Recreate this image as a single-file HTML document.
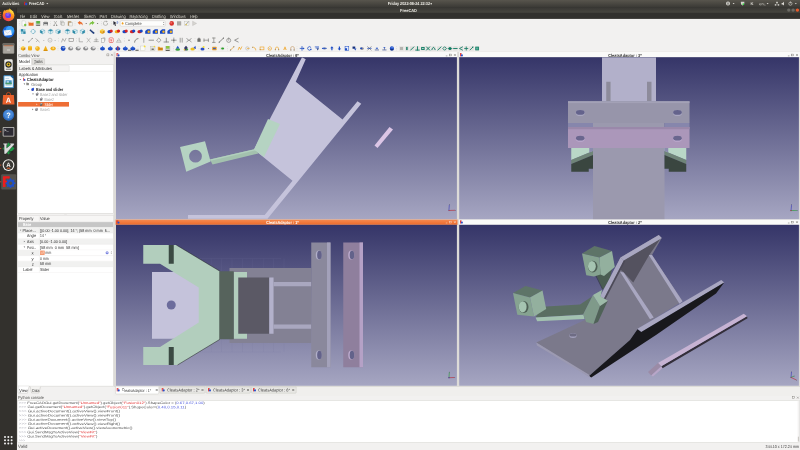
<!DOCTYPE html>
<html lang="en"><head><meta charset="utf-8"><title>FreeCAD</title>
<style>
html,body{margin:0;padding:0;background:#f2f1f0;}
body{width:800px;height:450px;overflow:hidden;position:relative;font-family:'Liberation Sans', sans-serif;}
svg{position:absolute;left:0;top:0;display:block;will-change:transform;}
text{font-family:'Liberation Sans', sans-serif;white-space:pre;text-rendering:geometricPrecision;}
</style></head><body>
<svg width="800" height="450" viewBox="0 0 800 450">
<defs>
<linearGradient id="bg" x1="0" y1="0" x2="0" y2="1"><stop offset="0" stop-color="#353568"/><stop offset="1" stop-color="#a6a6c2"/></linearGradient>
<linearGradient id="tb" x1="0" y1="0" x2="0" y2="1"><stop offset="0" stop-color="#393834"/><stop offset="1" stop-color="#474640"/></linearGradient>
<linearGradient id="pn" x1="0" y1="0" x2="0" y2="1"><stop offset="0" stop-color="#58554d"/><stop offset="1" stop-color="#393834"/></linearGradient>
<linearGradient id="or" x1="0" y1="0" x2="0" y2="1"><stop offset="0" stop-color="#f58a50"/><stop offset="1" stop-color="#ec6a2c"/></linearGradient>
<linearGradient id="ffx" x1="0.9" y1="0" x2="0.2" y2="1"><stop offset="0" stop-color="#ffd030"/><stop offset="0.45" stop-color="#ff8a1c"/><stop offset="1" stop-color="#f5305c"/></linearGradient>
</defs>
<rect x="0.00" y="0.00" width="800.00" height="450.00" fill="#f2f1f0"/>
<rect x="0.00" y="0.00" width="800.00" height="18.40" fill="#32312e"/>
<rect x="0.00" y="0.00" width="800.00" height="7.60" fill="url(#pn)"/>
<rect x="0.00" y="7.50" width="800.00" height="5.20" fill="url(#tb)"/>
<rect x="16.80" y="18.00" width="783.20" height="0.80" fill="#2c2b28"/>
<rect x="0.00" y="7.60" width="16.80" height="443.00" fill="#33312d"/>
<rect x="16.30" y="7.60" width="0.60" height="443.00" fill="#2a2926"/>
<text x="2.30" y="5.18" transform="rotate(0.03 2.30 5.18)" font-size="4.4" fill="#e8e6e0" font-weight="bold" textLength="17.00" lengthAdjust="spacingAndGlyphs">Activities</text>
<rect x="24.20" y="1.80" width="1.20" height="3.40" fill="#e02020"/>
<circle cx="26.20" cy="4.00" r="1.20" fill="#2a50c8"/>
<text x="29.00" y="5.18" transform="rotate(0.03 29.00 5.18)" font-size="4.4" fill="#e8e6e0" font-weight="bold" textLength="15.40" lengthAdjust="spacingAndGlyphs">FreeCAD</text>
<polygon points="46.30,3.00 48.30,3.00 47.30,4.30" fill="#e8e6e0"/>
<text x="387.80" y="5.18" transform="rotate(0.03 387.80 5.18)" font-size="4.4" fill="#eeece6" font-weight="bold" textLength="42.20" lengthAdjust="spacingAndGlyphs">Friday 2022-06-24 22:32</text>
<circle cx="431.20" cy="3.70" r="0.80" fill="#eeece6"/>
<circle cx="728.00" cy="3.60" r="2.00" fill="#d8d6d0"/>
<rect x="727.60" y="2.40" width="0.80" height="2.40" fill="#34332f"/>
<polygon points="732.60,3.00 734.60,3.00 733.60,4.20" fill="#d8d6d0"/>
<polygon points="740.80,1.80 744.40,1.80 744.20,4.20 742.60,5.60 741.00,4.20" fill="#d8d6d0"/>
<circle cx="743.30" cy="4.20" r="0.90" fill="#38d048"/>
<text x="750.60" y="5.11" transform="rotate(0.03 750.60 5.11)" font-size="4.2" fill="#d8d6d0" font-weight="bold">K</text>
<text x="759.30" y="5.17" transform="rotate(0.03 759.30 5.17)" font-size="3.8" fill="#d8d6d0" textLength="4.60" lengthAdjust="spacingAndGlyphs">en</text>
<text x="764.20" y="5.46" transform="rotate(0.03 764.20 5.46)" font-size="2.4" fill="#d8d6d0">1</text>
<polygon points="766.60,3.00 768.60,3.00 767.60,4.20" fill="#d8d6d0"/>
<rect x="776.20" y="1.80" width="1.60" height="1.40" fill="#d8d6d0"/>
<rect x="774.80" y="4.20" width="1.50" height="1.40" fill="#d8d6d0"/>
<rect x="777.70" y="4.20" width="1.50" height="1.40" fill="#d8d6d0"/>
<rect x="776.80" y="3.00" width="0.40" height="1.40" fill="#d8d6d0"/>
<polygon points="781.60,3.00 782.60,3.00 784.00,1.80 784.00,5.40 782.60,4.40 781.60,4.40" fill="#d8d6d0"/>
<circle cx="790.4" cy="3.7" r="1.6" fill="none" stroke="#d8d6d0" stroke-width="0.6"/>
<rect x="790.10" y="1.60" width="0.60" height="1.80" fill="#d8d6d0"/>
<polygon points="794.80,3.00 796.80,3.00 795.80,4.20" fill="#d8d6d0"/>
<text x="400.00" y="11.68" transform="rotate(0.03 400.00 11.68)" font-size="4.4" fill="#e8e6e0" font-weight="bold" textLength="17.00" lengthAdjust="spacingAndGlyphs">FreeCAD</text>
<circle cx="788.80" cy="10.10" r="1.70" fill="#6b6a64"/>
<circle cx="793.10" cy="10.10" r="1.70" fill="#6b6a64"/>
<circle cx="797.40" cy="10.10" r="1.70" fill="#e8592a"/>
<text x="20.00" y="17.72" transform="rotate(0.03 20.00 17.72)" font-size="4.5" fill="#dcd9d0" textLength="5.00" lengthAdjust="spacingAndGlyphs">File</text>
<line x1="20.00" y1="17.90" x2="21.60" y2="17.90" stroke="#dcd9d0" stroke-width="0.3" opacity="0.7"/>
<text x="30.00" y="17.72" transform="rotate(0.03 30.00 17.72)" font-size="4.5" fill="#dcd9d0" textLength="6.90" lengthAdjust="spacingAndGlyphs">Edit</text>
<line x1="30.00" y1="17.90" x2="31.60" y2="17.90" stroke="#dcd9d0" stroke-width="0.3" opacity="0.7"/>
<text x="41.25" y="17.72" transform="rotate(0.03 41.25 17.72)" font-size="4.5" fill="#dcd9d0" textLength="8.15" lengthAdjust="spacingAndGlyphs">View</text>
<line x1="41.25" y1="17.90" x2="42.85" y2="17.90" stroke="#dcd9d0" stroke-width="0.3" opacity="0.7"/>
<text x="53.75" y="17.72" transform="rotate(0.03 53.75 17.72)" font-size="4.5" fill="#dcd9d0" textLength="8.75" lengthAdjust="spacingAndGlyphs">Tools</text>
<line x1="53.75" y1="17.90" x2="55.35" y2="17.90" stroke="#dcd9d0" stroke-width="0.3" opacity="0.7"/>
<text x="66.90" y="17.72" transform="rotate(0.03 66.90 17.72)" font-size="4.5" fill="#dcd9d0" textLength="12.50" lengthAdjust="spacingAndGlyphs">Meshes</text>
<line x1="66.90" y1="17.90" x2="68.50" y2="17.90" stroke="#dcd9d0" stroke-width="0.3" opacity="0.7"/>
<text x="84.00" y="17.72" transform="rotate(0.03 84.00 17.72)" font-size="4.5" fill="#dcd9d0" textLength="11.60" lengthAdjust="spacingAndGlyphs">Sketch</text>
<line x1="84.00" y1="17.90" x2="85.60" y2="17.90" stroke="#dcd9d0" stroke-width="0.3" opacity="0.7"/>
<text x="99.40" y="17.72" transform="rotate(0.03 99.40 17.72)" font-size="4.5" fill="#dcd9d0" textLength="7.50" lengthAdjust="spacingAndGlyphs">Part</text>
<line x1="99.40" y1="17.90" x2="101.00" y2="17.90" stroke="#dcd9d0" stroke-width="0.3" opacity="0.7"/>
<text x="111.00" y="17.72" transform="rotate(0.03 111.00 17.72)" font-size="4.5" fill="#dcd9d0" textLength="14.60" lengthAdjust="spacingAndGlyphs">Drawing</text>
<line x1="111.00" y1="17.90" x2="112.60" y2="17.90" stroke="#dcd9d0" stroke-width="0.3" opacity="0.7"/>
<text x="129.40" y="17.72" transform="rotate(0.03 129.40 17.72)" font-size="4.5" fill="#dcd9d0" textLength="18.10" lengthAdjust="spacingAndGlyphs">Raytracing</text>
<line x1="129.40" y1="17.90" x2="131.00" y2="17.90" stroke="#dcd9d0" stroke-width="0.3" opacity="0.7"/>
<text x="151.90" y="17.72" transform="rotate(0.03 151.90 17.72)" font-size="4.5" fill="#dcd9d0" textLength="13.70" lengthAdjust="spacingAndGlyphs">Drafting</text>
<line x1="151.90" y1="17.90" x2="153.50" y2="17.90" stroke="#dcd9d0" stroke-width="0.3" opacity="0.7"/>
<text x="170.00" y="17.72" transform="rotate(0.03 170.00 17.72)" font-size="4.5" fill="#dcd9d0" textLength="15.60" lengthAdjust="spacingAndGlyphs">Windows</text>
<line x1="170.00" y1="17.90" x2="171.60" y2="17.90" stroke="#dcd9d0" stroke-width="0.3" opacity="0.7"/>
<text x="190.00" y="17.72" transform="rotate(0.03 190.00 17.72)" font-size="4.5" fill="#dcd9d0" textLength="7.50" lengthAdjust="spacingAndGlyphs">Help</text>
<line x1="190.00" y1="17.90" x2="191.60" y2="17.90" stroke="#dcd9d0" stroke-width="0.3" opacity="0.7"/>
<circle cx="8.50" cy="15.40" r="5.90" fill="url(#ffx)"/>
<polygon points="9.10,8.20 12.90,11.20 13.90,14.80 9.70,11.80" fill="#ffd23c"/>
<polygon points="2.90,13.80 4.10,10.00 6.90,12.00" fill="#ff9a28"/>
<circle cx="8.10" cy="15.20" r="2.90" fill="#6a3de8"/>
<circle cx="7.60" cy="14.60" r="1.50" fill="#8a5cf6"/>
<path d="M4.9,13.0 Q8.1,11.2 11.3,13.8 Q8.7,12.8 4.9,13.0 Z" fill="#ffb030"/>
<rect x="0.20" y="12.00" width="1.00" height="1.00" fill="#e8592a"/>
<rect x="0.20" y="13.90" width="1.00" height="1.00" fill="#e8592a"/>
<rect x="0.20" y="15.80" width="1.00" height="1.00" fill="#e8592a"/>
<rect x="0.20" y="17.70" width="1.00" height="1.00" fill="#e8592a"/>
<circle cx="8.50" cy="31.68" r="6.00" fill="#1a66d8"/>
<circle cx="10.00" cy="30.18" r="4.20" fill="#3aa0f5"/>
<polygon points="3.70,30.48 11.10,29.68 11.90,34.88 4.50,35.68" fill="#f4f6fa"/>
<polyline points="3.9000000000000004,30.68 7.9,33.28 11.1,29.88" fill="none" stroke="#b8c4d8" stroke-width="0.5"/>
<rect x="2.7" y="43.16" width="11.6" height="10.6" rx="1.2" fill="#8e8b84"/>
<rect x="2.70" y="43.16" width="11.60" height="2.20" fill="#6c6962"/>
<rect x="3.30" y="45.76" width="10.40" height="7.40" fill="#a9a59e"/>
<rect x="4.10" y="45.46" width="8.80" height="0.70" fill="#d06a3a"/>
<rect x="6.90" y="49.56" width="3.20" height="0.90" fill="#dedbd4"/>
<rect x="4.3" y="59.239999999999995" width="8.4" height="11.8" rx="1.3" fill="#ecebe8"/>
<circle cx="8.50" cy="64.44" r="3.20" fill="#2a2a2a"/>
<circle cx="8.50" cy="64.44" r="2.00" fill="#e8c020"/>
<circle cx="8.50" cy="64.44" r="0.90" fill="#2a2a2a"/>
<rect x="5.90" y="68.64" width="5.20" height="1.20" fill="#8a8880"/>
<polygon points="3.90,75.72 10.50,75.72 13.30,78.52 13.30,87.72 3.90,87.72" fill="#f6fafc" stroke="#2f86c6" stroke-width="0.9" stroke-linejoin="round"/>
<polygon points="10.10,75.52 13.50,78.92 13.50,75.52" fill="#1b5c98"/>
<rect x="5.50" y="78.12" width="3.60" height="0.60" fill="#9cc4e0"/>
<rect x="5.50" y="80.32" width="6.20" height="4.00" fill="#3f8fc4"/>
<rect x="5.50" y="82.52" width="6.20" height="1.80" fill="#4a9a6a"/>
<rect x="6.70" y="81.32" width="2.20" height="1.20" fill="#e4f0f8"/>
<rect x="5.50" y="85.32" width="6.20" height="0.60" fill="#9cc4e0"/>
<polygon points="3.10,95.00 13.90,95.00 14.50,104.40 2.50,104.40" fill="#e8612c"/>
<path d="M6.3,95.0 a2.2,2.6 0 0 1 4.4,0" fill="none" stroke="#c84a1c" stroke-width="0.9"/>
<text x="8.50" y="102.86" transform="rotate(0.03 8.50 102.86)" font-size="7.4" fill="#ffffff" font-weight="bold" text-anchor="middle">A</text>
<circle cx="8.50" cy="115.08" r="5.70" fill="#2f6cc0"/>
<circle cx="8.50" cy="114.28" r="4.60" fill="#4a8ad8"/>
<text x="8.50" y="117.84" transform="rotate(0.03 8.50 117.84)" font-size="7.4" fill="#ffffff" font-weight="bold" text-anchor="middle">?</text>
<rect x="0.20" y="131.26" width="1.00" height="1.00" fill="#e8592a"/>
<rect x="2.7" y="126.96" width="11.6" height="9.6" rx="1.0" fill="#cfcdc8"/>
<rect x="3.50" y="127.76" width="10.00" height="8.00" fill="#2d2b33"/>
<text x="4.30" y="131.53" transform="rotate(0.03 4.30 131.53)" font-size="3.8" fill="#f0f0f0" font-weight="bold">&gt;_</text>
<rect x="0.20" y="147.94" width="1.00" height="1.00" fill="#e8592a"/>
<polygon points="8.50,142.44 14.50,148.44 8.50,154.44 2.50,148.44" fill="#1c9a44"/>
<polygon points="3.10,143.24 7.50,143.24 7.50,144.64 6.70,144.64 6.70,148.04 10.70,144.64 9.90,144.64 9.90,143.24 14.10,143.24 14.10,144.64 5.90,154.04 4.10,154.04 4.10,144.64 3.10,144.64" fill="#dcdcdc" stroke="#222" stroke-width="0.4"/>
<text x="9.10" y="152.86" transform="rotate(0.03 9.10 152.86)" font-size="3.4" fill="#222" font-weight="bold">im</text>
<rect x="0.20" y="164.62" width="1.00" height="1.00" fill="#e8592a"/>
<circle cx="8.50" cy="165.12" r="5.90" fill="#f0eeea"/>
<circle cx="8.50" cy="165.12" r="4.80" fill="#3a3935"/>
<text x="8.50" y="167.05" transform="rotate(0.03 8.50 167.05)" font-size="6.2" fill="#f0eeea" font-weight="bold" text-anchor="middle">A</text>
<rect x="6.90" y="167.72" width="3.20" height="1.00" fill="#e8612c"/>
<rect x="1.2" y="174.20000000000002" width="15" height="15.4" rx="1" fill="#55534e"/>
<rect x="0.20" y="181.30" width="1.00" height="1.00" fill="#e8592a"/>
<polygon points="2.90,176.20 9.70,176.20 9.70,178.60 5.50,178.60 5.50,180.80 8.10,180.80 8.10,183.00 5.50,183.00 5.50,187.00 2.90,187.00" fill="#ee1c1c"/>
<circle cx="10.50" cy="183.20" r="3.80" fill="#1f50c8"/>
<circle cx="10.50" cy="183.20" r="1.70" fill="#55534e"/>
<circle cx="14.50" cy="183.20" r="0.90" fill="#1f50c8"/>
<circle cx="13.33" cy="186.03" r="0.90" fill="#1f50c8"/>
<circle cx="10.50" cy="187.20" r="0.90" fill="#1f50c8"/>
<circle cx="7.67" cy="186.03" r="0.90" fill="#1f50c8"/>
<circle cx="6.50" cy="183.20" r="0.90" fill="#1f50c8"/>
<circle cx="7.67" cy="180.37" r="0.90" fill="#1f50c8"/>
<circle cx="10.50" cy="179.20" r="0.90" fill="#1f50c8"/>
<circle cx="13.33" cy="180.37" r="0.90" fill="#1f50c8"/>
<circle cx="5.00" cy="437.00" r="1.00" fill="#f0f0f0"/>
<circle cx="8.30" cy="437.00" r="1.00" fill="#f0f0f0"/>
<circle cx="11.60" cy="437.00" r="1.00" fill="#f0f0f0"/>
<circle cx="5.00" cy="440.30" r="1.00" fill="#f0f0f0"/>
<circle cx="8.30" cy="440.30" r="1.00" fill="#f0f0f0"/>
<circle cx="11.60" cy="440.30" r="1.00" fill="#f0f0f0"/>
<circle cx="5.00" cy="443.60" r="1.00" fill="#f0f0f0"/>
<circle cx="8.30" cy="443.60" r="1.00" fill="#f0f0f0"/>
<circle cx="11.60" cy="443.60" r="1.00" fill="#f0f0f0"/>
<circle cx="19.40" cy="21.80" r="0.28" fill="#b8b6b0"/>
<circle cx="19.40" cy="23.40" r="0.28" fill="#b8b6b0"/>
<circle cx="19.40" cy="25.00" r="0.28" fill="#b8b6b0"/>
<polygon points="22.00,20.80 24.60,20.80 25.60,21.80 25.60,26.00 22.00,26.00" fill="#fbfbfb" stroke="#a8a8a4" stroke-width="0.3"/>
<circle cx="25.20" cy="25.00" r="1.20" fill="#7cc242"/>
<polygon points="28.60,21.80 30.40,21.80 30.90,22.50 33.60,22.50 33.60,25.80 28.60,25.80" fill="#e9722a"/>
<rect x="29.00" y="21.00" width="3.60" height="1.60" fill="#f6f0e0"/>
<rect x="35.60" y="21.00" width="5.00" height="5.00" fill="#cfcfca" rx="0.5"/>
<rect x="36.30" y="21.00" width="3.60" height="2.60" fill="#59b243"/>
<rect x="36.20" y="24.80" width="3.80" height="0.90" fill="#585852"/>
<rect x="43.40" y="22.00" width="4.60" height="3.40" fill="#6c6e70" rx="0.5"/>
<rect x="44.00" y="20.90" width="3.40" height="1.40" fill="#d8d8d4"/>
<rect x="44.00" y="24.20" width="3.40" height="1.60" fill="#e8e8e4"/>
<circle cx="50.60" cy="21.80" r="0.28" fill="#b8b6b0"/>
<circle cx="50.60" cy="23.40" r="0.28" fill="#b8b6b0"/>
<circle cx="50.60" cy="25.00" r="0.28" fill="#b8b6b0"/>
<path d="M54,21.0 L56.8,25.0 M56.8,21.0 L54,25.0" stroke="#8a8a86" stroke-width="0.5" fill="none"/>
<circle cx="54.10" cy="25.40" r="0.70" fill="#8a8a86"/>
<circle cx="56.70" cy="25.40" r="0.70" fill="#8a8a86"/>
<rect x="60.60" y="21.00" width="2.80" height="3.60" fill="#d4d4d0" stroke="#9a9a96" stroke-width="0.3"/>
<rect x="61.80" y="22.20" width="2.80" height="3.60" fill="#e4e4e0" stroke="#9a9a96" stroke-width="0.3"/>
<rect x="67.80" y="21.20" width="3.60" height="4.60" fill="#b89868" rx="0.4"/>
<rect x="69.00" y="22.60" width="3.20" height="3.40" fill="#f2f2ee" stroke="#9a9a96" stroke-width="0.3"/>
<circle cx="75.00" cy="21.80" r="0.28" fill="#b8b6b0"/>
<circle cx="75.00" cy="23.40" r="0.28" fill="#b8b6b0"/>
<circle cx="75.00" cy="25.00" r="0.28" fill="#b8b6b0"/>
<path d="M77.6,22.799999999999997 L80.2,20.799999999999997 L80.2,22.0 C82.6,22.0 83,24.4 82.4,25.599999999999998 C82,24.2 81.4,23.799999999999997 80.2,23.799999999999997 L80.2,25.0 Z" fill="#ea6a28"/>
<polygon points="85.40,23.10 87.00,23.10 86.20,24.00" fill="#55534e"/>
<path d="M94.6,22.799999999999997 L92,20.799999999999997 L92,22.0 C89.6,22.0 89.2,24.4 89.8,25.599999999999998 C90.2,24.2 90.8,23.799999999999997 92,23.799999999999997 L92,25.0 Z" fill="#7cc242"/>
<polygon points="96.80,23.10 98.40,23.10 97.60,24.00" fill="#55534e"/>
<circle cx="101.40" cy="21.80" r="0.28" fill="#b8b6b0"/>
<circle cx="101.40" cy="23.40" r="0.28" fill="#b8b6b0"/>
<circle cx="101.40" cy="25.00" r="0.28" fill="#b8b6b0"/>
<path d="M107.6,23.0 A2.1,2.1 0 1 1 106.4,21.4" fill="none" stroke="#a6a6a2" stroke-width="0.7"/>
<polygon points="106.00,20.40 107.80,21.40 106.20,22.40" fill="#a6a6a2"/>
<circle cx="111.20" cy="21.80" r="0.28" fill="#b8b6b0"/>
<circle cx="111.20" cy="23.40" r="0.28" fill="#b8b6b0"/>
<circle cx="111.20" cy="25.00" r="0.28" fill="#b8b6b0"/>
<polygon points="113.40,21.00 116.80,23.20 115.20,23.60 116.00,25.60 115.00,25.90 114.30,24.00 113.40,25.00" fill="#2c2c38"/>
<text x="116.20" y="23.90" transform="rotate(0.03 116.20 23.90)" font-size="3.6" fill="#2a50c8" font-weight="bold">?</text>
<rect x="120.2" y="20.7" width="45" height="5.5" rx="0.9" fill="#fdfdfc" stroke="#c2c0ba" stroke-width="0.4"/>
<circle cx="122.60" cy="23.60" r="1.00" fill="#f0a020"/>
<polygon points="121.90,23.20 122.60,21.90 123.30,23.20" fill="#f0a020"/>
<text x="125.00" y="25.05" transform="rotate(0.03 125.00 25.05)" font-size="4.3" fill="#3c3c3c" textLength="16.60" lengthAdjust="spacingAndGlyphs">Complete</text>
<polygon points="163.00,22.80 164.40,22.80 163.70,21.80" fill="#77756f"/>
<polygon points="163.00,24.00 164.40,24.00 163.70,25.00" fill="#77756f"/>
<circle cx="171.70" cy="23.40" r="2.30" fill="#d9322c"/>
<circle cx="171.20" cy="22.80" r="1.00" fill="#ec6a62"/>
<rect x="177.00" y="21.30" width="4.20" height="4.20" fill="#aaa9a5" rx="0.3"/>
<rect x="184.80" y="21.20" width="4.20" height="4.40" fill="#f4f4f0" stroke="#a8a8a4" stroke-width="0.3"/>
<line x1="185.40" y1="25.00" x2="188.60" y2="21.60" stroke="#555" stroke-width="0.5"/>
<circle cx="186.20" cy="24.70" r="0.60" fill="#e8c020"/>
<polygon points="192.60,21.20 196.60,23.40 192.60,25.60" fill="#d6d5d1" stroke="#a9a8a3" stroke-width="0.3"/>
<circle cx="19.40" cy="29.90" r="0.28" fill="#b8b6b0"/>
<circle cx="19.40" cy="31.50" r="0.28" fill="#b8b6b0"/>
<circle cx="19.40" cy="33.10" r="0.28" fill="#b8b6b0"/>
<rect x="20.80" y="29.10" width="2.60" height="2.60" fill="#2d8aa8"/>
<rect x="23.20" y="31.30" width="2.40" height="2.60" fill="#2d8aa8"/>
<rect x="21.00" y="32.10" width="1.80" height="1.80" fill="#7cc4d8"/>
<rect x="23.60" y="29.30" width="1.80" height="1.60" fill="#7cc4d8"/>
<circle cx="33.1" cy="31.5" r="2.0" fill="#eaf4f8" stroke="#2d8aa8" stroke-width="0.7" stroke-dasharray="1.1,0.6"/>
<polygon points="42.50,29.20 44.80,30.35 42.50,31.50 40.20,30.35" fill="#e4f2f7" stroke="#2d8aa8" stroke-width="0.3" stroke-linejoin="round"/>
<polygon points="40.20,30.35 42.50,31.50 42.50,33.80 40.20,32.65" fill="#2d8aa8" stroke="#2d8aa8" stroke-width="0.3" stroke-linejoin="round"/>
<polygon points="44.80,30.35 42.50,31.50 42.50,33.80 44.80,32.65" fill="#e4f2f7" stroke="#2d8aa8" stroke-width="0.3" stroke-linejoin="round"/>
<polygon points="50.60,29.20 52.90,30.35 50.60,31.50 48.30,30.35" fill="#2d8aa8" stroke="#2d8aa8" stroke-width="0.3" stroke-linejoin="round"/>
<polygon points="48.30,30.35 50.60,31.50 50.60,33.80 48.30,32.65" fill="#e4f2f7" stroke="#2d8aa8" stroke-width="0.3" stroke-linejoin="round"/>
<polygon points="52.90,30.35 50.60,31.50 50.60,33.80 52.90,32.65" fill="#e4f2f7" stroke="#2d8aa8" stroke-width="0.3" stroke-linejoin="round"/>
<polygon points="58.10,29.20 60.40,30.35 58.10,31.50 55.80,30.35" fill="#e4f2f7" stroke="#2d8aa8" stroke-width="0.3" stroke-linejoin="round"/>
<polygon points="55.80,30.35 58.10,31.50 58.10,33.80 55.80,32.65" fill="#e4f2f7" stroke="#2d8aa8" stroke-width="0.3" stroke-linejoin="round"/>
<polygon points="60.40,30.35 58.10,31.50 58.10,33.80 60.40,32.65" fill="#2d8aa8" stroke="#2d8aa8" stroke-width="0.3" stroke-linejoin="round"/>
<circle cx="63.00" cy="29.90" r="0.28" fill="#b8b6b0"/>
<circle cx="63.00" cy="31.50" r="0.28" fill="#b8b6b0"/>
<circle cx="63.00" cy="33.10" r="0.28" fill="#b8b6b0"/>
<polygon points="67.50,29.20 69.80,30.35 67.50,31.50 65.20,30.35" fill="#2d8aa8" stroke="#2d8aa8" stroke-width="0.3" stroke-linejoin="round"/>
<polygon points="65.20,30.35 67.50,31.50 67.50,33.80 65.20,32.65" fill="#e4f2f7" stroke="#2d8aa8" stroke-width="0.3" stroke-linejoin="round"/>
<polygon points="69.80,30.35 67.50,31.50 67.50,33.80 69.80,32.65" fill="#e4f2f7" stroke="#2d8aa8" stroke-width="0.3" stroke-linejoin="round"/>
<polygon points="75.00,29.20 77.30,30.35 75.00,31.50 72.70,30.35" fill="#e4f2f7" stroke="#2d8aa8" stroke-width="0.3" stroke-linejoin="round"/>
<polygon points="72.70,30.35 75.00,31.50 75.00,33.80 72.70,32.65" fill="#2d8aa8" stroke="#2d8aa8" stroke-width="0.3" stroke-linejoin="round"/>
<polygon points="77.30,30.35 75.00,31.50 75.00,33.80 77.30,32.65" fill="#e4f2f7" stroke="#2d8aa8" stroke-width="0.3" stroke-linejoin="round"/>
<polygon points="82.50,29.20 84.80,30.35 82.50,31.50 80.20,30.35" fill="#e4f2f7" stroke="#2d8aa8" stroke-width="0.3" stroke-linejoin="round"/>
<polygon points="80.20,30.35 82.50,31.50 82.50,33.80 80.20,32.65" fill="#e4f2f7" stroke="#2d8aa8" stroke-width="0.3" stroke-linejoin="round"/>
<polygon points="84.80,30.35 82.50,31.50 82.50,33.80 84.80,32.65" fill="#2d8aa8" stroke="#2d8aa8" stroke-width="0.3" stroke-linejoin="round"/>
<circle cx="87.50" cy="29.90" r="0.28" fill="#b8b6b0"/>
<circle cx="87.50" cy="31.50" r="0.28" fill="#b8b6b0"/>
<circle cx="87.50" cy="33.10" r="0.28" fill="#b8b6b0"/>
<path d="M90.6,29.3 L94.8,33.1 L93.4,34.1 L89.4,30.3 Z" fill="#1c3a78"/>
<line x1="91.20" y1="30.70" x2="92.20" y2="29.80" stroke="#e8e8f4" stroke-width="0.3"/>
<line x1="92.40" y1="31.80" x2="93.40" y2="30.90" stroke="#e8e8f4" stroke-width="0.3"/>
<circle cx="98.00" cy="29.90" r="0.28" fill="#b8b6b0"/>
<circle cx="98.00" cy="31.50" r="0.28" fill="#b8b6b0"/>
<circle cx="98.00" cy="33.10" r="0.28" fill="#b8b6b0"/>
<polygon points="102.30,29.10 104.70,30.30 102.30,31.50 99.90,30.30" fill="#f8d048"/>
<polygon points="99.90,30.30 102.30,31.50 102.30,33.90 99.90,32.70" fill="#f2b01c"/>
<polygon points="104.70,30.30 102.30,31.50 102.30,33.90 104.70,32.70" fill="#d8900c"/>
<ellipse cx="109.6" cy="31.7" rx="2.2" ry="1.6" fill="#1848c4"/>
<ellipse cx="111.2" cy="31.1" rx="1.6" ry="1.5" fill="#d82222"/>
<ellipse cx="116.89999999999999" cy="31.7" rx="2.2" ry="1.6" fill="#f2b01c"/>
<ellipse cx="118.5" cy="31.1" rx="1.6" ry="1.5" fill="#d82222"/>
<ellipse cx="124.6" cy="31.7" rx="2.2" ry="1.6" fill="#1848c4"/>
<ellipse cx="126.2" cy="31.1" rx="1.6" ry="1.5" fill="#d82222"/>
<ellipse cx="132.10000000000002" cy="31.7" rx="2.2" ry="1.6" fill="#d82222"/>
<ellipse cx="133.70000000000002" cy="31.1" rx="1.6" ry="1.5" fill="#1848c4"/>
<ellipse cx="139.60000000000002" cy="31.7" rx="2.2" ry="1.6" fill="#d82222"/>
<ellipse cx="141.20000000000002" cy="31.1" rx="1.6" ry="1.5" fill="#1848c4"/>
<polygon points="145.20,33.70 145.20,30.90 147.40,29.30 150.40,29.30 150.40,33.70" fill="#1848c4"/>
<circle cx="148.70" cy="31.80" r="1.20" fill="#f2b01c"/>
<polygon points="152.70,33.70 152.70,30.90 154.90,29.30 157.90,29.30 157.90,33.70" fill="#1848c4"/>
<circle cx="156.20" cy="31.80" r="1.20" fill="#f2b01c"/>
<polygon points="160.00,33.70 160.00,30.90 162.20,29.30 165.20,29.30 165.20,33.70" fill="#1848c4"/>
<circle cx="163.50" cy="31.80" r="1.20" fill="#f2b01c"/>
<polygon points="167.40,33.70 167.40,30.90 169.60,29.30 172.60,29.30 172.60,33.70" fill="#1848c4"/>
<circle cx="170.90" cy="31.80" r="1.20" fill="#f2b01c"/>
<circle cx="19.40" cy="38.60" r="0.28" fill="#b8b6b0"/>
<circle cx="19.40" cy="40.20" r="0.28" fill="#b8b6b0"/>
<circle cx="19.40" cy="41.80" r="0.28" fill="#b8b6b0"/>
<circle cx="23.10" cy="40.20" r="0.60" fill="#6e6e6c"/>
<path d="M28.8,41.800000000000004 L32.2,38.6" fill="none" stroke="#6e6e6c" stroke-width="0.45" stroke-linecap="round"/>
<circle cx="28.80" cy="41.80" r="0.50" fill="#6e6e6c"/>
<circle cx="32.20" cy="38.60" r="0.50" fill="#6e6e6c"/>
<path d="M35.8,38.6 L37.6,40.400000000000006 L36.4,41.6 M37.6,40.400000000000006 L39.4,42.0" fill="none" stroke="#6e6e6c" stroke-width="0.45" stroke-linecap="round"/>
<polygon points="43.10,39.90 44.50,39.90 43.80,40.70" fill="#8a8a86"/>
<circle cx="50" cy="40.2" r="2.0" fill="none" stroke="#9a9a98" stroke-width="0.5"/>
<circle cx="50.00" cy="40.20" r="0.40" fill="#6e6e6c"/>
<polygon points="54.40,39.90 55.80,39.90 55.10,40.70" fill="#8a8a86"/>
<circle cx="58.60" cy="38.60" r="0.28" fill="#b8b6b0"/>
<circle cx="58.60" cy="40.20" r="0.28" fill="#b8b6b0"/>
<circle cx="58.60" cy="41.80" r="0.28" fill="#b8b6b0"/>
<path d="M61.6,42.0 L62.8,38.6 L64.6,41.400000000000006 L66,38.400000000000006" fill="none" stroke="#6e6e6c" stroke-width="0.45" stroke-linecap="round"/>
<rect x="69" y="38.5" width="4.6" height="3.2" fill="none" stroke="#6e6e6c" stroke-width="0.5"/>
<circle cx="76.40" cy="38.60" r="0.28" fill="#b8b6b0"/>
<circle cx="76.40" cy="40.20" r="0.28" fill="#b8b6b0"/>
<circle cx="76.40" cy="41.80" r="0.28" fill="#b8b6b0"/>
<path d="M79.2,38.2 L79.2,41.800000000000004 L82.6,41.800000000000004" fill="none" stroke="#6e6e6c" stroke-width="0.45" stroke-linecap="round"/>
<path d="M87,38.2 L90.2,42.2 M90.2,38.2 L87,42.2" fill="none" stroke="#8a8a88" stroke-width="0.45" stroke-linecap="round"/>
<path d="M94,41.6 L98.4,41.6 M94.6,39.800000000000004 L97.8,39.800000000000004 M96.2,38.2 L96.2,41.6" fill="none" stroke="#7a7a78" stroke-width="0.45" stroke-linecap="round"/>
<rect x="101.40" y="38.40" width="3.00" height="3.80" fill="#f4f4f2" stroke="#8a8a88" stroke-width="0.4"/>
<path d="M103,37.800000000000004 L105,37.800000000000004 L105,40.2" fill="none" stroke="#8a8a88" stroke-width="0.45" stroke-linecap="round"/>
<rect x="109.2" y="37.900000000000006" width="4" height="4.6" rx="0.8" fill="#fff" stroke="#e03a34" stroke-width="0.6"/>
<text x="110.20" y="41.62" transform="rotate(0.03 110.20 41.62)" font-size="3.4" fill="#e03a34" font-weight="bold">8</text>
<path d="M116.6,42.0 L118.8,38.400000000000006 L121,42.0 Z M117.4,40.800000000000004 L120.2,40.800000000000004" fill="none" stroke="#8a8a88" stroke-width="0.4" stroke-linecap="round"/>
<circle cx="124.40" cy="38.60" r="0.28" fill="#b8b6b0"/>
<circle cx="124.40" cy="40.20" r="0.28" fill="#b8b6b0"/>
<circle cx="124.40" cy="41.80" r="0.28" fill="#b8b6b0"/>
<circle cx="129.00" cy="40.20" r="0.70" fill="#6e6e6c"/>
<path d="M134.6,42.2 A3.4,3.4 0 0 1 138,38.6" fill="none" stroke="#6e6e6c" stroke-width="0.8" stroke-linecap="round"/>
<path d="M143.8,38.0 L143.8,42.400000000000006" fill="none" stroke="#8a8a88" stroke-width="0.7" stroke-linecap="round"/>
<path d="M149,40.2 L153.6,40.2" fill="none" stroke="#6a6a68" stroke-width="0.7" stroke-linecap="round"/>
<path d="M158.8,38.0 L161,40.2 L158.8,42.400000000000006 L156.6,40.2 Z" fill="none" stroke="#6e6e6c" stroke-width="0.6"/>
<path d="M164,42.0 L168.6,42.0 M166.3,42.0 L166.3,38.2" fill="none" stroke="#6e6e6c" stroke-width="0.7" stroke-linecap="round"/>
<path d="M171.4,40.2 L176.2,40.2 M173.8,38.0 L173.8,42.400000000000006" fill="none" stroke="#6e6e6c" stroke-width="0.6" stroke-linecap="round"/>
<circle cx="173.80" cy="40.20" r="0.70" fill="#6e6e6c"/>
<path d="M180.2,38.2 L180.2,42.2 M182.2,38.2 L182.2,42.2" fill="none" stroke="#6a6a68" stroke-width="0.6" stroke-linecap="round"/>
<path d="M186.8,38.400000000000006 L188.4,40.2 L186.8,42.0 M191.2,38.400000000000006 L189.6,40.2 L191.2,42.0 M188.4,40.2 L189.6,40.2" fill="none" stroke="#6e6e6c" stroke-width="0.6" stroke-linecap="round"/>
<circle cx="195.00" cy="38.60" r="0.28" fill="#b8b6b0"/>
<circle cx="195.00" cy="40.20" r="0.28" fill="#b8b6b0"/>
<circle cx="195.00" cy="41.80" r="0.28" fill="#b8b6b0"/>
<rect x="197.40" y="38.60" width="3.20" height="3.20" fill="#6e6e6c"/>
<rect x="198.20" y="37.80" width="1.60" height="1.00" fill="#6e6e6c"/>
<path d="M204,40.2 L208.4,40.2 M204,38.800000000000004 L204,41.6 M208.4,38.800000000000004 L208.4,41.6" fill="none" stroke="#6e6e6c" stroke-width="0.6" stroke-linecap="round"/>
<path d="M213.8,38.0 L213.8,42.400000000000006 M212.4,38.0 L215.2,38.0 M212.4,42.400000000000006 L215.2,42.400000000000006" fill="none" stroke="#6e6e6c" stroke-width="0.6" stroke-linecap="round"/>
<path d="M219.2,42.2 L223.4,38.2" fill="none" stroke="#6e6e6c" stroke-width="0.8" stroke-linecap="round"/>
<circle cx="219.20" cy="42.20" r="0.60" fill="#6e6e6c"/>
<circle cx="223.40" cy="38.20" r="0.60" fill="#6e6e6c"/>
<circle cx="228.7" cy="40.400000000000006" r="2.0" fill="none" stroke="#6e6e6c" stroke-width="0.6"/>
<path d="M228.7,37.800000000000004 L228.7,40.400000000000006" fill="none" stroke="#6e6e6c" stroke-width="0.5" stroke-linecap="round"/>
<path d="M238.2,38.400000000000006 L234.6,40.2 L238.2,42.0" fill="none" stroke="#6e6e6c" stroke-width="0.7" stroke-linecap="round"/>
<circle cx="19.40" cy="46.80" r="0.28" fill="#b8b6b0"/>
<circle cx="19.40" cy="48.40" r="0.28" fill="#b8b6b0"/>
<circle cx="19.40" cy="50.00" r="0.28" fill="#b8b6b0"/>
<polygon points="23.10,46.10 25.40,47.25 23.10,48.40 20.80,47.25" fill="#f8d048"/>
<polygon points="20.80,47.25 23.10,48.40 23.10,50.70 20.80,49.55" fill="#f2b01c"/>
<polygon points="25.40,47.25 23.10,48.40 23.10,50.70 25.40,49.55" fill="#d8900c"/>
<rect x="28.00" y="46.60" width="4.00" height="4.00" fill="#f2b01c" rx="1"/>
<ellipse cx="30.00" cy="46.60" rx="2.00" ry="0.80" fill="#f8d048"/>
<circle cx="37.50" cy="48.60" r="2.30" fill="#f2b01c"/>
<circle cx="36.80" cy="47.80" r="1.00" fill="#f8d860"/>
<polygon points="45.60,45.80 47.80,50.40 43.40,50.40" fill="#f2b01c"/>
<ellipse cx="45.60" cy="50.40" rx="2.20" ry="0.70" fill="#d8900c"/>
<ellipse cx="53.10" cy="48.60" rx="2.70" ry="2.00" fill="#f2b01c"/>
<ellipse cx="53.30" cy="48.00" rx="1.00" ry="0.60" fill="#fff8d8"/>
<circle cx="58.00" cy="46.80" r="0.28" fill="#b8b6b0"/>
<circle cx="58.00" cy="48.40" r="0.28" fill="#b8b6b0"/>
<circle cx="58.00" cy="50.00" r="0.28" fill="#b8b6b0"/>
<circle cx="63.10" cy="48.50" r="2.40" fill="#1a48c0"/>
<ellipse cx="63.60" cy="47.60" rx="1.40" ry="0.80" fill="#88a8e8"/>
<ellipse cx="70.60" cy="48.60" rx="2.50" ry="2.00" fill="#8a8a8c"/>
<ellipse cx="71.20" cy="47.80" rx="1.40" ry="1.00" fill="#e4e4e6"/>
<ellipse cx="78.10" cy="48.60" rx="2.50" ry="2.00" fill="#8a8a8c"/>
<ellipse cx="78.70" cy="47.80" rx="1.40" ry="1.00" fill="#e4e4e6"/>
<ellipse cx="85.60" cy="48.60" rx="2.50" ry="2.00" fill="#8a8a8c"/>
<ellipse cx="86.20" cy="47.80" rx="1.40" ry="1.00" fill="#e4e4e6"/>
<ellipse cx="93.10" cy="48.60" rx="2.50" ry="2.00" fill="#8a8a8c"/>
<ellipse cx="93.70" cy="47.80" rx="1.40" ry="1.00" fill="#e4e4e6"/>
<circle cx="98.00" cy="46.80" r="0.28" fill="#b8b6b0"/>
<circle cx="98.00" cy="48.40" r="0.28" fill="#b8b6b0"/>
<circle cx="98.00" cy="50.00" r="0.28" fill="#b8b6b0"/>
<ellipse cx="102.50" cy="48.80" rx="2.50" ry="1.80" fill="#1a48c0"/>
<polygon points="101.10,48.40 102.50,45.80 103.90,48.40" fill="#2a60d8"/>
<ellipse cx="110.30" cy="48.80" rx="2.50" ry="1.80" fill="#1a48c0"/>
<polygon points="108.90,48.40 110.30,45.80 111.70,48.40" fill="#2a60d8"/>
<ellipse cx="117.80" cy="48.80" rx="2.50" ry="1.80" fill="#1a48c0"/>
<polygon points="116.40,48.40 117.80,45.80 119.20,48.40" fill="#2a60d8"/>
<ellipse cx="125.30" cy="48.80" rx="2.50" ry="1.80" fill="#1a48c0"/>
<polygon points="123.90,48.40 125.30,45.80 126.70,48.40" fill="#2a60d8"/>
<ellipse cx="132.80" cy="48.80" rx="2.50" ry="1.80" fill="#1a48c0"/>
<polygon points="131.40,48.40 132.80,45.80 134.20,48.40" fill="#2a60d8"/>
<rect x="117.40" y="46.20" width="0.90" height="4.20" fill="#e03030"/>
<rect x="128.00" y="49.80" width="3.20" height="0.80" fill="#222"/>
<rect x="135.40" y="49.80" width="3.20" height="0.80" fill="#222"/>
<circle cx="138.00" cy="46.80" r="0.28" fill="#b8b6b0"/>
<circle cx="138.00" cy="48.40" r="0.28" fill="#b8b6b0"/>
<circle cx="138.00" cy="50.00" r="0.28" fill="#b8b6b0"/>
<rect x="140.80" y="46.00" width="4.20" height="4.80" fill="#fbfbf6" stroke="#b8b8b0" stroke-width="0.3"/>
<circle cx="144.60" cy="46.40" r="0.90" fill="#f8e030"/>
<rect x="150.40" y="46.20" width="4.60" height="4.40" fill="#e4e4de" stroke="#a8a8a0" stroke-width="0.3"/>
<circle cx="154.40" cy="46.50" r="0.80" fill="#f8e030"/>
<rect x="151.60" y="48.60" width="2.20" height="1.20" fill="#55534e"/>
<polygon points="157.80,46.80 159.60,46.80 160.10,47.50 162.80,47.50 162.80,50.60 157.80,50.60" fill="#e9a02a"/>
<rect x="158.60" y="48.20" width="4.00" height="1.60" fill="#c87818"/>
<rect x="165.20" y="46.00" width="5.00" height="5.00" fill="#c8c8c2" rx="0.5"/>
<rect x="166.00" y="46.00" width="3.40" height="2.60" fill="#8cc63f"/>
<rect x="165.80" y="50.00" width="3.80" height="0.80" fill="#44443e"/>
<circle cx="173.20" cy="46.80" r="0.28" fill="#b8b6b0"/>
<circle cx="173.20" cy="48.40" r="0.28" fill="#b8b6b0"/>
<circle cx="173.20" cy="50.00" r="0.28" fill="#b8b6b0"/>
<polygon points="177.70,45.80 179.60,48.80 175.80,48.80" fill="#2458c8"/>
<ellipse cx="177.70" cy="49.60" rx="2.40" ry="1.20" fill="#3aa040"/>
<polygon points="184.20,47.80 186.00,45.80 187.60,47.60 186.80,50.60 184.60,50.40" fill="#3a3a68"/>
<circle cx="187.20" cy="49.60" r="1.00" fill="#3aa040"/>
<circle cx="184.40" cy="49.80" r="0.80" fill="#e8c020"/>
<ellipse cx="192.60" cy="49.00" rx="2.20" ry="1.60" fill="#f0c020"/>
<polygon points="193.40,48.00 195.40,45.80 196.00,49.00" fill="#2a50c8"/>
<circle cx="199.00" cy="46.80" r="0.28" fill="#b8b6b0"/>
<circle cx="199.00" cy="48.40" r="0.28" fill="#b8b6b0"/>
<circle cx="199.00" cy="50.00" r="0.28" fill="#b8b6b0"/>
<ellipse cx="202.50" cy="49.00" rx="2.00" ry="1.60" fill="#2a50c8"/>
<circle cx="203.60" cy="47.00" r="1.00" fill="#f8e030"/>
<polygon points="207.80,48.10 209.20,48.10 208.50,48.90" fill="#55534e"/>
<rect x="212.20" y="46.80" width="4.40" height="3.40" fill="#f0a020" rx="0.4"/>
<rect x="213.00" y="47.80" width="2.80" height="1.40" fill="#3a60c8"/>
<ellipse cx="222.20" cy="48.60" rx="2.40" ry="1.90" fill="#e8e8e2"/>
<ellipse cx="222.60" cy="48.60" rx="1.50" ry="1.00" fill="#2ca02c"/>
<circle cx="227.40" cy="46.80" r="0.28" fill="#b8b6b0"/>
<circle cx="227.40" cy="48.40" r="0.28" fill="#b8b6b0"/>
<circle cx="227.40" cy="50.00" r="0.28" fill="#b8b6b0"/>
<g transform="translate(232.2,48.4) scale(0.88) translate(-232.2,-48.4)">
<path d="M230.39999999999998,50.199999999999996 L234.0,46.6" fill="none" stroke="#f0a21e" stroke-width="0.8" stroke-linecap="round"/>
<circle cx="230.40" cy="50.20" r="0.60" fill="#555"/>
<circle cx="234.00" cy="46.60" r="0.60" fill="#555"/>
</g>
<g transform="translate(240,48.4) scale(0.88) translate(-240,-48.4)">
<path d="M238,50.0 L239.2,46.8 L240.6,49.6 L242,46.6" fill="none" stroke="#f0a21e" stroke-width="0.8" stroke-linecap="round"/>
</g>
<g transform="translate(247.3,48.4) scale(0.88) translate(-247.3,-48.4)">
<circle cx="247.3" cy="48.4" r="1.9" fill="none" stroke="#b0b0b0" stroke-width="0.6"/>
<path d="M247.3,48.4 L249.3,48.4" fill="none" stroke="#f0a21e" stroke-width="0.8" stroke-linecap="round"/>
</g>
<g transform="translate(254.4,48.4) scale(0.88) translate(-254.4,-48.4)">
<path d="M252.4,47.0 A3,3 0 0 1 256.0,50.199999999999996" fill="none" stroke="#f0a21e" stroke-width="0.8" stroke-linecap="round"/>
<circle cx="252.40" cy="47.00" r="0.50" fill="#555"/>
</g>
<g transform="translate(262,48.4) scale(0.88) translate(-262,-48.4)">
<rect x="259.8" y="46.8" width="4.4" height="3.2" fill="none" stroke="#f0a21e" stroke-width="0.7"/>
<circle cx="259.80" cy="50.00" r="0.50" fill="#555"/>
</g>
<g transform="translate(269.8,48.4) scale(0.88) translate(-269.8,-48.4)">
<path d="M269.8,46.199999999999996 L271.90000000000003,47.8 L271.1,50.3 L268.5,50.3 L267.7,47.8 Z" fill="none" stroke="#f0a21e" stroke-width="0.7"/>
<circle cx="269.80" cy="48.40" r="0.50" fill="#777"/>
</g>
<g transform="translate(277,48.4) scale(0.88) translate(-277,-48.4)">
<path d="M275,50.0 C275.4,45.4 278.6,45.4 279,50.0" fill="none" stroke="#f0a21e" stroke-width="0.8" stroke-linecap="round"/>
<circle cx="275.00" cy="50.00" r="0.50" fill="#555"/>
<circle cx="279.00" cy="50.00" r="0.50" fill="#555"/>
</g>
<g transform="translate(285,48.4) scale(0.88) translate(-285,-48.4)">
<text x="285.00" y="50.54" transform="rotate(0.03 285.00 50.54)" font-size="5.4" fill="#f0a21e" font-weight="bold" text-anchor="middle">A</text>
</g>
<g transform="translate(292.5,48.4) scale(0.88) translate(-292.5,-48.4)">
<path d="M290.5,50.4 L290.5,47.8 C290.5,45.8 294.5,45.8 294.5,47.8 L294.5,50.4" fill="none" stroke="#c8a070" stroke-width="0.8" stroke-linecap="round"/>
<rect x="290.10" y="49.60" width="1.20" height="1.20" fill="#888"/>
<rect x="293.70" y="49.60" width="1.20" height="1.20" fill="#888"/>
</g>
<circle cx="297.00" cy="46.80" r="0.28" fill="#b8b6b0"/>
<circle cx="297.00" cy="48.40" r="0.28" fill="#b8b6b0"/>
<circle cx="297.00" cy="50.00" r="0.28" fill="#b8b6b0"/>
<g transform="translate(302,48.4) scale(0.85) translate(-302,-48.4)">
<path d="M299.8,48.4 L304.2,48.4 M302,46.199999999999996 L302,50.6" fill="none" stroke="#1c4cc4" stroke-width="0.9" stroke-linecap="round"/>
<polygon points="303.20,47.20 304.80,48.40 303.20,49.60" fill="#1c4cc4"/>
</g>
<g transform="translate(309.4,48.4) scale(0.85) translate(-309.4,-48.4)">
<path d="M311.2,47.199999999999996 A2.1,2.1 0 1 0 311.2,49.6" fill="none" stroke="#1c4cc4" stroke-width="0.9" stroke-linecap="round"/>
<polygon points="310.00,48.80 312.20,49.00 311.20,51.00" fill="#1c4cc4"/>
</g>
<g transform="translate(316.9,48.4) scale(0.85) translate(-316.9,-48.4)">
<path d="M314.9,46.6 L318.9,46.6 M315.9,48.0 L318.9,48.0" fill="none" stroke="#1c4cc4" stroke-width="0.8" stroke-linecap="round"/>
<polygon points="316.70,48.60 319.10,48.60 317.90,51.00" fill="#16307a"/>
</g>
<g transform="translate(324.4,48.4) scale(0.85) translate(-324.4,-48.4)">
<path d="M322.0,48.4 L326.79999999999995,48.4" fill="none" stroke="#1c4cc4" stroke-width="0.9" stroke-linecap="round"/>
<polygon points="321.60,48.40 323.40,47.00 323.40,49.80" fill="#1c4cc4"/>
<rect x="324.60" y="47.00" width="0.80" height="2.80" fill="#16307a"/>
</g>
<g transform="translate(331.9,48.4) scale(0.85) translate(-331.9,-48.4)">
<polygon points="331.90,45.80 333.90,48.20 332.60,48.20 332.60,50.60 331.20,50.60 331.20,48.20 329.90,48.20" fill="#1c4cc4"/>
</g>
<g transform="translate(339.4,48.4) scale(0.85) translate(-339.4,-48.4)">
<polygon points="339.40,51.00 341.40,48.60 340.10,48.60 340.10,46.20 338.70,46.20 338.70,48.60 337.40,48.60" fill="#1c4cc4"/>
</g>
<g transform="translate(346.9,48.4) scale(0.85) translate(-346.9,-48.4)">
<rect x="344.7" y="46.199999999999996" width="4.4" height="4.4" fill="#e8eefc" stroke="#1c4cc4" stroke-width="0.6"/>
<rect x="344.70" y="48.20" width="2.40" height="2.40" fill="#1c4cc4"/>
</g>
<g transform="translate(354.4,48.4) scale(0.85) translate(-354.4,-48.4)">
<rect x="352.20" y="46.20" width="3.20" height="2.60" fill="#16307a"/>
<polygon points="354.00,48.60 356.80,48.60 355.40,51.00" fill="#1c4cc4"/>
</g>
<g transform="translate(361.9,48.4) scale(0.85) translate(-361.9,-48.4)">
<ellipse cx="361.90" cy="48.60" rx="2.20" ry="1.60" fill="#8a8a98"/>
<ellipse cx="361.10" cy="48.20" rx="1.20" ry="1.00" fill="#1c4cc4"/>
</g>
<g transform="translate(369.4,48.4) scale(0.85) translate(-369.4,-48.4)">
<path d="M367.4,46.4 L371.4,50.4 M371.4,46.4 L367.4,50.4" fill="none" stroke="#444" stroke-width="0.6" stroke-linecap="round"/>
<path d="M367.2,48.4 L371.59999999999997,48.4" fill="none" stroke="#1c4cc4" stroke-width="0.8" stroke-linecap="round"/>
</g>
<g transform="translate(376.9,48.4) scale(0.85) translate(-376.9,-48.4)">
<path d="M374.9,50.199999999999996 L378.9,50.199999999999996" fill="none" stroke="#16307a" stroke-width="0.7" stroke-linecap="round"/>
<rect x="375.70" y="47.60" width="2.40" height="1.20" fill="#1c4cc4"/>
</g>
<g transform="translate(384.4,48.4) scale(0.85) translate(-384.4,-48.4)">
<path d="M382.4,50.199999999999996 L386.4,50.199999999999996" fill="none" stroke="#16307a" stroke-width="0.7" stroke-linecap="round"/>
<rect x="383.40" y="47.00" width="2.00" height="1.00" fill="#1c4cc4"/>
<rect x="384.10" y="47.80" width="0.60" height="2.00" fill="#16307a"/>
</g>
<g transform="translate(391.9,48.4) scale(0.85) translate(-391.9,-48.4)">
<circle cx="391.90" cy="48.40" r="2.40" fill="#1c4cc4"/>
<ellipse cx="392.30" cy="47.50" rx="1.40" ry="0.80" fill="#5a86e8"/>
<ellipse cx="391.90" cy="50.00" rx="2.20" ry="0.90" fill="#16307a"/>
</g>
<circle cx="396.60" cy="46.80" r="0.28" fill="#b8b6b0"/>
<circle cx="396.60" cy="48.40" r="0.28" fill="#b8b6b0"/>
<circle cx="396.60" cy="50.00" r="0.28" fill="#b8b6b0"/>
<rect x="399.20" y="46.20" width="4.60" height="4.60" fill="#e2e1de" rx="0.5"/>
<rect x="400.00" y="47.00" width="3.00" height="3.00" fill="#b4b3af"/>
<rect x="404.60" y="46.20" width="4.60" height="4.60" fill="#e2e1de" rx="0.5"/>
<rect x="406.20" y="46.90" width="1.40" height="3.20" fill="#0f7a62"/>
<rect x="409.95" y="46.20" width="4.60" height="4.60" fill="#e2e1de" rx="0.5"/>
<path d="M410.65,50.1 L413.85,46.9" fill="none" stroke="#0f7a62" stroke-width="0.9" stroke-linecap="round"/>
<rect x="415.20" y="46.20" width="4.60" height="4.60" fill="#e2e1de" rx="0.5"/>
<path d="M415.7,50.1 L419.3,50.1 M417.5,50.1 L417.5,46.7" fill="none" stroke="#0f7a62" stroke-width="0.9" stroke-linecap="round"/>
<rect x="420.60" y="46.20" width="4.60" height="4.60" fill="#e2e1de" rx="0.5"/>
<rect x="421.20" y="47.00" width="3.40" height="3.00" fill="#0f7a62"/>
<rect x="422.10" y="47.90" width="1.60" height="1.20" fill="#bfe0d6"/>
<rect x="425.80" y="46.20" width="4.60" height="4.60" fill="#e2e1de" rx="0.5"/>
<path d="M426.5,46.9 L429.70000000000005,50.1 M429.70000000000005,46.9 L426.5,50.1" fill="none" stroke="#0f7a62" stroke-width="0.9" stroke-linecap="round"/>
<rect x="431.20" y="46.20" width="4.60" height="4.60" fill="#e2e1de" rx="0.5"/>
<path d="M431.9,49.7 C432.9,46.5 434.1,46.5 435.1,49.7" fill="none" stroke="#0f7a62" stroke-width="0.9" stroke-linecap="round"/>
<rect x="437.10" y="46.20" width="4.60" height="4.60" fill="#e2e1de" rx="0.5"/>
<path d="M437.79999999999995,50.1 L441.0,46.9" fill="none" stroke="#0f7a62" stroke-width="0.9" stroke-linecap="round"/>
<rect x="442.30" y="46.20" width="4.60" height="4.60" fill="#e2e1de" rx="0.5"/>
<path d="M444.6,46.7 L446.40000000000003,48.5 L444.6,50.3 L442.8,48.5 Z" fill="none" stroke="#0f7a62" stroke-width="0.8"/>
<rect x="447.70" y="46.20" width="4.60" height="4.60" fill="#e2e1de" rx="0.5"/>
<circle cx="450.00" cy="48.50" r="1.50" fill="#0f7a62"/>
<path d="M448,48.5 L452,48.5" fill="none" stroke="#0f7a62" stroke-width="0.6" stroke-linecap="round"/>
<rect x="453.10" y="46.20" width="4.60" height="4.60" fill="#e2e1de" rx="0.5"/>
<path d="M453.59999999999997,48.5 L457.2,48.5" fill="none" stroke="#0f7a62" stroke-width="0.9" stroke-linecap="round"/>
<rect x="458.60" y="46.20" width="4.60" height="4.60" fill="#e2e1de" rx="0.5"/>
<path d="M462.5,46.9 L459.5,48.5 L462.5,50.1" fill="none" stroke="#0f7a62" stroke-width="0.8" stroke-linecap="round"/>
<rect x="463.95" y="46.20" width="4.60" height="4.60" fill="#e2e1de" rx="0.5"/>
<path d="M464.65,48.5 L467.85,48.5 M466.25,46.9 L466.25,50.1" fill="none" stroke="#0f7a62" stroke-width="0.8" stroke-linecap="round"/>
<rect x="469.20" y="46.20" width="4.60" height="4.60" fill="#e2e1de" rx="0.5"/>
<path d="M470.1,49.9 L472.9,47.1" fill="none" stroke="#0f7a62" stroke-width="0.8" stroke-linecap="round"/>
<circle cx="472.70" cy="47.30" r="0.70" fill="#0f7a62"/>
<rect x="474.80" y="46.20" width="4.60" height="4.60" fill="#e2e1de" rx="0.5"/>
<rect x="475.30" y="46.70" width="3.60" height="3.60" fill="#0f7a62"/>
<rect x="476.00" y="47.40" width="2.20" height="2.20" fill="#58b098"/>
<text x="18.20" y="56.68" transform="rotate(0.03 18.20 56.68)" font-size="4.4" fill="#4a4a48" textLength="21.20" lengthAdjust="spacingAndGlyphs">Combo View</text>
<rect x="106.9" y="53.9" width="2.0" height="2.0" fill="none" stroke="#77756f" stroke-width="0.4"/>
<path d="M110.9,53.9 L112.9,55.9 M112.9,53.9 L110.9,55.9" stroke="#77756f" stroke-width="0.45" fill="none"/>
<rect x="17.80" y="64.40" width="95.60" height="149.00" fill="#ffffff" stroke="#c9c7c2" stroke-width="0.4"/>
<path d="M18,64.6 L18,58.6 Q18,57.8 18.8,57.8 L30.8,57.8 Q31.6,57.8 31.6,58.6 L31.6,64.6 Z" fill="#ffffff" stroke="#c2c0ba" stroke-width="0.4"/>
<rect x="18.20" y="64.00" width="13.20" height="1.00" fill="#ffffff"/>
<path d="M32.4,64.4 L32.4,59.4 Q32.4,58.6 33.2,58.6 L43.8,58.6 Q44.6,58.6 44.6,59.4 L44.6,64.4 Z" fill="#e4e3e0" stroke="#c2c0ba" stroke-width="0.4"/>
<text x="18.90" y="62.88" transform="rotate(0.03 18.90 62.88)" font-size="4.4" fill="#2c2c2c" textLength="11.00" lengthAdjust="spacingAndGlyphs">Model</text>
<text x="33.90" y="63.18" transform="rotate(0.03 33.90 63.18)" font-size="4.4" fill="#2c2c2c" textLength="8.90" lengthAdjust="spacingAndGlyphs">Tasks</text>
<line x1="33.90" y1="63.30" x2="35.50" y2="63.30" stroke="#2c2c2c" stroke-width="0.3"/>
<rect x="18.10" y="65.80" width="51.00" height="5.50" fill="#f5f4f3" stroke="#d8d6d2" stroke-width="0.4"/>
<text x="19.10" y="70.25" transform="rotate(0.03 19.10 70.25)" font-size="4.3" fill="#2c2c2c" textLength="32.80" lengthAdjust="spacingAndGlyphs">Labels &amp; Attributes</text>
<line x1="18.00" y1="71.40" x2="113.20" y2="71.40" stroke="#e4e3e0" stroke-width="0.4"/>
<text x="18.80" y="75.55" transform="rotate(0.03 18.80 75.55)" font-size="4.3" fill="#2c2c2c" textLength="19.30" lengthAdjust="spacingAndGlyphs">Application</text>
<polygon points="19.50,78.90 21.10,78.90 20.30,80.00" fill="#555"/>
<rect x="23.30" y="77.80" width="0.80" height="3.00" fill="#e02020"/>
<circle cx="24.60" cy="79.90" r="0.90" fill="#2a50c8"/>
<text x="27.10" y="80.98" transform="rotate(0.03 27.10 80.98)" font-size="4.4" fill="#222" font-weight="bold" textLength="26.60" lengthAdjust="spacingAndGlyphs">CleatsAdaptor</text>
<polygon points="23.60,83.60 25.20,83.60 24.40,84.70" fill="#555"/>
<rect x="26.30" y="83.00" width="2.60" height="2.20" fill="#8a8a86"/>
<rect x="26.30" y="82.60" width="1.20" height="0.60" fill="#8a8a86"/>
<text x="31.30" y="85.65" transform="rotate(0.03 31.30 85.65)" font-size="4.3" fill="#5a5a58" textLength="10.60" lengthAdjust="spacingAndGlyphs">Group</text>
<polygon points="27.70,88.90 29.30,88.90 28.50,90.00" fill="#555"/>
<polygon points="31.30,89.00 33.20,87.70 34.10,88.60 33.70,90.70 31.70,91.00" fill="#1c3cb8"/>
<polygon points="31.30,89.00 33.20,87.70 34.10,88.60 32.40,89.60" fill="#3a64e0"/>
<text x="36.00" y="90.98" transform="rotate(0.03 36.00 90.98)" font-size="4.4" fill="#222" font-weight="bold" textLength="27.10" lengthAdjust="spacingAndGlyphs">Base and slider</text>
<polygon points="32.20,93.60 33.80,93.60 33.00,94.70" fill="#666"/>
<polygon points="35.70,93.70 37.60,92.40 38.50,93.30 38.10,95.40 36.10,95.70" fill="#77777c"/>
<polygon points="35.70,93.70 37.60,92.40 38.50,93.30 36.80,94.30" fill="#b4b4ba"/>
<text x="40.00" y="95.65" transform="rotate(0.03 40.00 95.65)" font-size="4.3" fill="#a2a2a2" textLength="27.50" lengthAdjust="spacingAndGlyphs">Base2 and slider</text>
<polygon points="36.40,98.30 37.50,99.10 36.40,99.90" fill="#666"/>
<polygon points="39.80,98.70 41.70,97.40 42.60,98.30 42.20,100.40 40.20,100.70" fill="#77777c"/>
<polygon points="39.80,98.70 41.70,97.40 42.60,98.30 40.90,99.30" fill="#b4b4ba"/>
<text x="44.40" y="100.65" transform="rotate(0.03 44.40 100.65)" font-size="4.3" fill="#a2a2a2" textLength="9.60" lengthAdjust="spacingAndGlyphs">Base2</text>
<rect x="18.10" y="102.00" width="50.90" height="4.60" fill="#ee6e35"/>
<polygon points="36.40,103.60 37.50,104.40 36.40,105.20" fill="#f8d8c8"/>
<polygon points="39.80,104.00 41.70,102.70 42.60,103.60 42.20,105.70 40.20,106.00" fill="#6a625e"/>
<polygon points="39.80,104.00 41.70,102.70 42.60,103.60 40.90,104.60" fill="#b8b0aa"/>
<text x="44.40" y="105.95" transform="rotate(0.03 44.40 105.95)" font-size="4.3" fill="#ffffff" textLength="8.70" lengthAdjust="spacingAndGlyphs">Slider</text>
<polygon points="32.30,108.60 33.40,109.40 32.30,110.20" fill="#666"/>
<polygon points="35.10,109.10 37.00,107.80 37.90,108.70 37.50,110.80 35.50,111.10" fill="#77777c"/>
<polygon points="35.10,109.10 37.00,107.80 37.90,108.70 36.20,109.70" fill="#b4b4ba"/>
<text x="40.30" y="110.95" transform="rotate(0.03 40.30 110.95)" font-size="4.3" fill="#a2a2a2" textLength="9.70" lengthAdjust="spacingAndGlyphs">Base1</text>
<circle cx="64.60" cy="214.60" r="0.22" fill="#a8a6a0"/>
<circle cx="65.50" cy="214.60" r="0.22" fill="#a8a6a0"/>
<circle cx="66.40" cy="214.60" r="0.22" fill="#a8a6a0"/>
<rect x="17.80" y="215.60" width="95.60" height="170.50" fill="#ffffff" stroke="#c9c7c2" stroke-width="0.4"/>
<rect x="18.00" y="215.80" width="95.20" height="6.00" fill="#f7f6f5"/>
<line x1="18.00" y1="221.90" x2="113.20" y2="221.90" stroke="#d8d6d2" stroke-width="0.4"/>
<line x1="39.40" y1="216.40" x2="39.40" y2="221.40" stroke="#dcdad6" stroke-width="0.4"/>
<text x="18.90" y="220.35" transform="rotate(0.03 18.90 220.35)" font-size="4.3" fill="#2c2c2c" textLength="14.60" lengthAdjust="spacingAndGlyphs">Property</text>
<text x="40.10" y="220.35" transform="rotate(0.03 40.10 220.35)" font-size="4.3" fill="#2c2c2c" textLength="9.60" lengthAdjust="spacingAndGlyphs">Value</text>
<rect x="18.00" y="222.10" width="95.20" height="5.30" fill="#c6c6c6"/>
<text x="23.00" y="226.28" transform="rotate(0.03 23.00 226.28)" font-size="4.4" fill="#ffffff" font-weight="bold" textLength="8.20" lengthAdjust="spacingAndGlyphs">Base</text>
<rect x="18.00" y="227.50" width="95.20" height="5.62" fill="#f1f1f0"/>
<line x1="18.00" y1="233.12" x2="113.20" y2="233.12" stroke="#e6e5e3" stroke-width="0.3"/>
<line x1="18.00" y1="238.74" x2="113.20" y2="238.74" stroke="#e6e5e3" stroke-width="0.3"/>
<rect x="18.00" y="238.74" width="95.20" height="5.62" fill="#f1f1f0"/>
<line x1="18.00" y1="244.36" x2="113.20" y2="244.36" stroke="#e6e5e3" stroke-width="0.3"/>
<line x1="18.00" y1="249.98" x2="113.20" y2="249.98" stroke="#e6e5e3" stroke-width="0.3"/>
<rect x="18.00" y="249.98" width="95.20" height="5.62" fill="#f1f1f0"/>
<line x1="18.00" y1="255.60" x2="113.20" y2="255.60" stroke="#e6e5e3" stroke-width="0.3"/>
<line x1="18.00" y1="261.22" x2="113.20" y2="261.22" stroke="#e6e5e3" stroke-width="0.3"/>
<rect x="18.00" y="261.22" width="95.20" height="5.62" fill="#f1f1f0"/>
<line x1="18.00" y1="266.84" x2="113.20" y2="266.84" stroke="#e6e5e3" stroke-width="0.3"/>
<line x1="18.00" y1="272.46" x2="113.20" y2="272.46" stroke="#e6e5e3" stroke-width="0.3"/>
<line x1="39.40" y1="227.50" x2="39.40" y2="272.46" stroke="#e2e1de" stroke-width="0.3"/>
<polygon points="19.80,229.71 21.40,229.71 20.60,230.81" fill="#666"/>
<text x="22.60" y="231.76" transform="rotate(0.03 22.60 231.76)" font-size="4.3" fill="#2c2c2c" textLength="13.20" lengthAdjust="spacingAndGlyphs">Place...</text>
<text x="40.10" y="231.76" transform="rotate(0.03 40.10 231.76)" font-size="4.3" fill="#2c2c2c" textLength="69.80" lengthAdjust="spacingAndGlyphs">[(0.00 -1.00 0.00); 14 °; (58 mm  0 mm  5...</text>
<text x="27.10" y="237.38" transform="rotate(0.03 27.10 237.38)" font-size="4.3" fill="#2c2c2c" textLength="9.20" lengthAdjust="spacingAndGlyphs">Angle</text>
<text x="40.10" y="237.38" transform="rotate(0.03 40.10 237.38)" font-size="4.3" fill="#2c2c2c" textLength="5.90" lengthAdjust="spacingAndGlyphs">14 °</text>
<polygon points="23.90,240.65 25.00,241.45 23.90,242.25" fill="#666"/>
<text x="27.10" y="243.00" transform="rotate(0.03 27.10 243.00)" font-size="4.3" fill="#2c2c2c" textLength="6.60" lengthAdjust="spacingAndGlyphs">Axis</text>
<text x="40.10" y="243.00" transform="rotate(0.03 40.10 243.00)" font-size="4.3" fill="#2c2c2c" textLength="27.00" lengthAdjust="spacingAndGlyphs">[0.00 -1.00 0.00]</text>
<polygon points="23.60,246.57 25.20,246.57 24.40,247.67" fill="#666"/>
<text x="27.10" y="248.62" transform="rotate(0.03 27.10 248.62)" font-size="4.3" fill="#2c2c2c" textLength="9.20" lengthAdjust="spacingAndGlyphs">Posi...</text>
<text x="40.10" y="248.62" transform="rotate(0.03 40.10 248.62)" font-size="4.3" fill="#2c2c2c" textLength="38.60" lengthAdjust="spacingAndGlyphs">[58 mm  0 mm  58 mm]</text>
<rect x="39.60" y="250.18" width="73.40" height="5.22" fill="#ffffff"/>
<text x="31.60" y="254.54" transform="rotate(0.03 31.60 254.54)" font-size="4.3" fill="#2c2c2c">x</text>
<rect x="40.00" y="250.69" width="4.60" height="4.00" fill="#ee6e35"/>
<text x="40.20" y="254.24" transform="rotate(0.03 40.20 254.24)" font-size="4.3" fill="#ffffff" textLength="4.30" lengthAdjust="spacingAndGlyphs">58</text>
<text x="45.60" y="254.24" transform="rotate(0.03 45.60 254.24)" font-size="4.3" fill="#2c2c2c" textLength="5.60" lengthAdjust="spacingAndGlyphs">mm</text>
<circle cx="107.10" cy="252.69" r="1.50" fill="#7c86e0"/>
<circle cx="107.10" cy="252.29" r="0.60" fill="#e4e6fa"/>
<polygon points="110.70,252.19 111.90,252.19 111.30,251.29" fill="#77756f"/>
<polygon points="110.70,253.19 111.90,253.19 111.30,254.09" fill="#77756f"/>
<text x="31.60" y="260.16" transform="rotate(0.03 31.60 260.16)" font-size="4.3" fill="#2c2c2c">y</text>
<text x="40.10" y="259.86" transform="rotate(0.03 40.10 259.86)" font-size="4.3" fill="#2c2c2c" textLength="8.60" lengthAdjust="spacingAndGlyphs">0 mm</text>
<text x="31.80" y="265.68" transform="rotate(0.03 31.80 265.68)" font-size="4.3" fill="#2c2c2c">z</text>
<text x="40.10" y="265.48" transform="rotate(0.03 40.10 265.48)" font-size="4.3" fill="#2c2c2c" textLength="11.10" lengthAdjust="spacingAndGlyphs">58 mm</text>
<text x="23.00" y="271.10" transform="rotate(0.03 23.00 271.10)" font-size="4.3" fill="#2c2c2c" textLength="9.40" lengthAdjust="spacingAndGlyphs">Label</text>
<text x="40.10" y="271.10" transform="rotate(0.03 40.10 271.10)" font-size="4.3" fill="#2c2c2c" textLength="9.10" lengthAdjust="spacingAndGlyphs">Slider</text>
<path d="M18,386.2 L18,392.4 Q18,393.2 18.8,393.2 L27.4,393.2 L29.2,386.2 Z" fill="#ffffff" stroke="#b8b6b0" stroke-width="0.4"/>
<rect x="18.30" y="385.70" width="10.60" height="0.90" fill="#ffffff"/>
<path d="M30.2,386.6 L31.6,393.0 L38.8,393.0 L40.6,386.6" fill="#f4f3f1" stroke="#b8b6b0" stroke-width="0.4"/>
<text x="19.30" y="391.85" transform="rotate(0.03 19.30 391.85)" font-size="4.3" fill="#2c2c2c" textLength="8.40" lengthAdjust="spacingAndGlyphs">View</text>
<line x1="19.30" y1="392.20" x2="20.90" y2="392.20" stroke="#2c2c2c" stroke-width="0.3"/>
<text x="32.20" y="391.95" transform="rotate(0.03 32.20 391.95)" font-size="4.3" fill="#2c2c2c" textLength="7.20" lengthAdjust="spacingAndGlyphs">Data</text>
<rect x="113.60" y="51.70" width="686.40" height="334.80" fill="#dddbd8"/>
<rect x="115.60" y="51.90" width="341.60" height="5.30" fill="#fafaf9"/>
<rect x="459.20" y="51.90" width="340.80" height="5.30" fill="#fafaf9"/>
<rect x="115.60" y="219.50" width="341.90" height="5.30" fill="url(#or)"/>
<rect x="459.20" y="219.60" width="340.80" height="5.20" fill="#fafaf9"/>
<rect x="116.60" y="53.40" width="0.80" height="3.00" fill="#e02020"/>
<rect x="116.60" y="53.40" width="1.80" height="0.80" fill="#e02020"/>
<circle cx="118.50" cy="55.40" r="1.05" fill="#2a50c8"/>
<rect x="460.00" y="53.40" width="0.80" height="3.00" fill="#e02020"/>
<rect x="460.00" y="53.40" width="1.80" height="0.80" fill="#e02020"/>
<circle cx="461.90" cy="55.40" r="1.05" fill="#2a50c8"/>
<rect x="116.60" y="220.60" width="0.80" height="3.00" fill="#e02020"/>
<rect x="116.60" y="220.60" width="1.80" height="0.80" fill="#e02020"/>
<circle cx="118.50" cy="222.60" r="1.05" fill="#2a50c8"/>
<rect x="460.00" y="220.60" width="0.80" height="3.00" fill="#e02020"/>
<rect x="460.00" y="220.60" width="1.80" height="0.80" fill="#e02020"/>
<circle cx="461.90" cy="222.60" r="1.05" fill="#2a50c8"/>
<line x1="445.80" y1="55.90" x2="447.40" y2="55.90" stroke="#66645e" stroke-width="0.5"/>
<rect x="449.60" y="54.10" width="1.8" height="1.8" fill="none" stroke="#66645e" stroke-width="0.4"/>
<path d="M454.00,54.10 l1.8,1.8 m0,-1.8 l-1.8,1.8" stroke="#66645e" stroke-width="0.5" fill="none"/>
<line x1="787.90" y1="55.90" x2="789.50" y2="55.90" stroke="#66645e" stroke-width="0.5"/>
<rect x="791.70" y="54.10" width="1.8" height="1.8" fill="none" stroke="#66645e" stroke-width="0.4"/>
<path d="M796.10,54.10 l1.8,1.8 m0,-1.8 l-1.8,1.8" stroke="#66645e" stroke-width="0.5" fill="none"/>
<line x1="445.80" y1="223.00" x2="447.40" y2="223.00" stroke="#fbe4d6" stroke-width="0.5"/>
<rect x="449.60" y="221.20" width="1.8" height="1.8" fill="none" stroke="#fbe4d6" stroke-width="0.4"/>
<path d="M454.00,221.20 l1.8,1.8 m0,-1.8 l-1.8,1.8" stroke="#fbe4d6" stroke-width="0.5" fill="none"/>
<line x1="787.90" y1="223.00" x2="789.50" y2="223.00" stroke="#66645e" stroke-width="0.5"/>
<rect x="791.70" y="221.20" width="1.8" height="1.8" fill="none" stroke="#66645e" stroke-width="0.4"/>
<path d="M796.10,221.20 l1.8,1.8 m0,-1.8 l-1.8,1.8" stroke="#66645e" stroke-width="0.5" fill="none"/>
<text x="282.50" y="56.58" transform="rotate(0.03 282.50 56.58)" font-size="4.4" fill="#2e2e2e" font-weight="bold" text-anchor="middle" textLength="32.50" lengthAdjust="spacingAndGlyphs">CleatsAdaptor : 6*</text>
<text x="625.00" y="56.58" transform="rotate(0.03 625.00 56.58)" font-size="4.4" fill="#2e2e2e" font-weight="bold" text-anchor="middle" textLength="33.50" lengthAdjust="spacingAndGlyphs">CleatsAdaptor : 3*</text>
<text x="282.50" y="223.68" transform="rotate(0.03 282.50 223.68)" font-size="4.4" fill="#ffffff" font-weight="bold" text-anchor="middle" textLength="32.50" lengthAdjust="spacingAndGlyphs">CleatsAdaptor : 1*</text>
<text x="625.00" y="223.68" transform="rotate(0.03 625.00 223.68)" font-size="4.4" fill="#2e2e2e" font-weight="bold" text-anchor="middle" textLength="33.50" lengthAdjust="spacingAndGlyphs">CleatsAdaptor : 2*</text>
<clipPath id="c1"><rect x="116.0" y="57.2" width="340.9" height="162.0"/></clipPath>
<rect x="116.00" y="57.20" width="340.90" height="162.00" fill="url(#bg)"/>
<clipPath id="c2"><rect x="459.2" y="57.2" width="339.7" height="162.0"/></clipPath>
<rect x="459.20" y="57.20" width="339.70" height="162.00" fill="url(#bg)"/>
<clipPath id="c3"><rect x="116.0" y="224.8" width="340.9" height="161.09999999999997"/></clipPath>
<rect x="116.00" y="224.80" width="340.90" height="161.10" fill="url(#bg)"/>
<clipPath id="c4"><rect x="459.2" y="224.8" width="339.7" height="161.09999999999997"/></clipPath>
<rect x="459.20" y="224.80" width="339.70" height="161.10" fill="url(#bg)"/>
<g clip-path="url(#c1)">
<polygon points="302.00,57.20 305.75,59.30 295.75,81.75 342.50,119.50 357.50,101.25 361.25,103.75 267.50,218.80 188.00,218.80 188.00,215.10 264.70,215.10 292.50,180.75 254.00,149.50" fill="#c5c3db"/>
<polygon points="210.00,159.50 255.50,149.00 258.40,153.40 212.50,164.60" fill="#a3c1ae"/>
<polygon points="210.00,159.50 255.50,149.00 256.20,150.20 210.60,160.80" fill="#b2d0be"/>
<polygon points="268.00,119.00 280.00,124.00 264.00,157.00 254.00,149.50" fill="#b5d3c2"/>
<path fill-rule="evenodd" fill="#b5d3c2" d="M180,147 L205,141.25 L210.6,161.4 L186.25,171.75 Z M201.9,156.2 a6.4,6.4 0 1 0 -12.8,0 a6.4,6.4 0 1 0 12.8,0 Z"/>
<polygon points="389.50,127.00 393.00,129.50 377.50,148.00 374.50,145.50" fill="#dcc6e6"/>
<line x1="448.90" y1="210.50" x2="449.30" y2="205.30" stroke="#3c3cb4" stroke-width="0.7" stroke-linecap="round" opacity="0.9"/>
<circle cx="449.35" cy="204.68" r="0.35" fill="#3a3a44"/>
<line x1="448.90" y1="210.50" x2="454.70" y2="210.30" stroke="#b82a34" stroke-width="0.7" stroke-linecap="round" opacity="0.9"/>
<circle cx="455.40" cy="210.28" r="0.35" fill="#3a3a44"/>
</g>
<g clip-path="url(#c2)">
<rect x="602.00" y="57.20" width="54.00" height="44.30" fill="#b2b0ca"/>
<rect x="606.25" y="81.75" width="4.30" height="19.60" fill="#8d8b9b"/>
<rect x="647.00" y="81.75" width="4.50" height="19.60" fill="#8d8b9b"/>
<rect x="593.00" y="123.00" width="71.50" height="96.40" fill="#9b99ae"/>
<rect x="568.00" y="122.80" width="25.00" height="4.40" fill="#8686ac"/>
<rect x="664.50" y="122.80" width="25.00" height="4.40" fill="#8686ac"/>
<rect x="568.00" y="101.25" width="121.50" height="21.75" fill="#9795aa"/>
<rect x="568.00" y="101.25" width="121.50" height="1.90" fill="#a3a1b6"/>
<rect x="568.00" y="127.00" width="121.50" height="21.00" fill="#ab97ba"/>
<rect x="568.00" y="127.00" width="121.50" height="2.20" fill="#9a88aa"/>
<ellipse cx="580.25" cy="113.00" rx="4.60" ry="3.10" fill="#a9a7c0"/>
<ellipse cx="580.25" cy="112.40" rx="4.30" ry="2.40" fill="#64638c"/>
<ellipse cx="580.25" cy="138.75" rx="4.60" ry="3.10" fill="#bba8cc"/>
<ellipse cx="580.25" cy="138.15" rx="4.30" ry="2.40" fill="#6a668e"/>
<ellipse cx="677.50" cy="113.00" rx="4.60" ry="3.10" fill="#a9a7c0"/>
<ellipse cx="677.50" cy="112.40" rx="4.30" ry="2.40" fill="#64638c"/>
<ellipse cx="677.50" cy="138.75" rx="4.60" ry="3.10" fill="#bba8cc"/>
<ellipse cx="677.50" cy="138.15" rx="4.30" ry="2.40" fill="#6a668e"/>
<polygon points="571.25,148.00 593.00,148.00 593.00,151.00 571.25,160.00" fill="#b9d7c7"/>
<polygon points="571.25,160.00 593.00,151.00 593.00,155.00 571.25,164.00" fill="#6f8578"/>
<polygon points="571.25,164.00 593.00,155.00 593.00,168.75 588.75,168.75 588.75,171.75 571.25,171.75" fill="#3a4640"/>
<polygon points="589.25,148.00 593.00,148.00 593.00,151.00 589.25,152.50" fill="#8a8cae"/>
<polygon points="686.25,148.00 664.50,148.00 664.50,151.00 686.25,160.00" fill="#b9d7c7"/>
<polygon points="686.25,160.00 664.50,151.00 664.50,155.00 686.25,164.00" fill="#6f8578"/>
<polygon points="686.25,164.00 664.50,155.00 664.50,168.75 668.75,168.75 668.75,171.75 686.25,171.75" fill="#3a4640"/>
<polygon points="668.25,148.00 664.50,148.00 664.50,151.00 668.25,152.50" fill="#8a8cae"/>
<line x1="791.00" y1="210.60" x2="791.60" y2="205.20" stroke="#3c3cb4" stroke-width="0.7" stroke-linecap="round" opacity="0.9"/>
<circle cx="791.67" cy="204.55" r="0.35" fill="#3a3a44"/>
<line x1="791.00" y1="210.60" x2="796.60" y2="210.40" stroke="#2a9a3a" stroke-width="0.7" stroke-linecap="round" opacity="0.9"/>
<circle cx="797.27" cy="210.38" r="0.35" fill="#3a3a44"/>
<circle cx="791.00" cy="210.60" r="0.60" fill="#b82a34"/>
</g>
<g clip-path="url(#c3)">
<line x1="180.00" y1="258.60" x2="180.00" y2="271.40" stroke="#8888b0" stroke-width="0.3" opacity="0.3"/>
<line x1="180.00" y1="339.00" x2="180.00" y2="352.00" stroke="#6c6c98" stroke-width="0.3" opacity="0.4"/>
<line x1="190.40" y1="258.60" x2="190.40" y2="271.40" stroke="#8888b0" stroke-width="0.3" opacity="0.3"/>
<line x1="190.40" y1="339.00" x2="190.40" y2="352.00" stroke="#6c6c98" stroke-width="0.3" opacity="0.4"/>
<line x1="200.80" y1="258.60" x2="200.80" y2="271.40" stroke="#8888b0" stroke-width="0.3" opacity="0.3"/>
<line x1="200.80" y1="339.00" x2="200.80" y2="352.00" stroke="#6c6c98" stroke-width="0.3" opacity="0.4"/>
<line x1="211.20" y1="258.60" x2="211.20" y2="271.40" stroke="#8888b0" stroke-width="0.3" opacity="0.3"/>
<line x1="211.20" y1="339.00" x2="211.20" y2="352.00" stroke="#6c6c98" stroke-width="0.3" opacity="0.4"/>
<line x1="221.60" y1="258.60" x2="221.60" y2="271.40" stroke="#8888b0" stroke-width="0.3" opacity="0.3"/>
<line x1="221.60" y1="339.00" x2="221.60" y2="352.00" stroke="#6c6c98" stroke-width="0.3" opacity="0.4"/>
<line x1="232.00" y1="258.60" x2="232.00" y2="271.40" stroke="#8888b0" stroke-width="0.3" opacity="0.3"/>
<line x1="232.00" y1="339.00" x2="232.00" y2="352.00" stroke="#6c6c98" stroke-width="0.3" opacity="0.4"/>
<line x1="242.40" y1="258.60" x2="242.40" y2="271.40" stroke="#8888b0" stroke-width="0.3" opacity="0.3"/>
<line x1="242.40" y1="339.00" x2="242.40" y2="352.00" stroke="#6c6c98" stroke-width="0.3" opacity="0.4"/>
<line x1="252.80" y1="258.60" x2="252.80" y2="271.40" stroke="#8888b0" stroke-width="0.3" opacity="0.3"/>
<line x1="252.80" y1="339.00" x2="252.80" y2="352.00" stroke="#6c6c98" stroke-width="0.3" opacity="0.4"/>
<line x1="263.20" y1="258.60" x2="263.20" y2="271.40" stroke="#8888b0" stroke-width="0.3" opacity="0.3"/>
<line x1="263.20" y1="339.00" x2="263.20" y2="352.00" stroke="#6c6c98" stroke-width="0.3" opacity="0.4"/>
<line x1="273.60" y1="258.60" x2="273.60" y2="271.40" stroke="#8888b0" stroke-width="0.3" opacity="0.3"/>
<line x1="273.60" y1="339.00" x2="273.60" y2="352.00" stroke="#6c6c98" stroke-width="0.3" opacity="0.4"/>
<line x1="284.00" y1="258.60" x2="284.00" y2="271.40" stroke="#8888b0" stroke-width="0.3" opacity="0.3"/>
<line x1="284.00" y1="339.00" x2="284.00" y2="352.00" stroke="#6c6c98" stroke-width="0.3" opacity="0.4"/>
<line x1="176.00" y1="258.60" x2="281.00" y2="258.60" stroke="#8888b0" stroke-width="0.3" opacity="0.3"/>
<line x1="200.00" y1="352.00" x2="281.00" y2="352.00" stroke="#6c6c98" stroke-width="0.3" opacity="0.4"/>
<rect x="229.50" y="268.00" width="81.80" height="75.00" fill="#838194"/>
<rect x="152.00" y="272.00" width="47.00" height="66.75" fill="#c5c3db"/>
<circle cx="171.25" cy="305.00" r="4.50" fill="#6c6c9c"/>
<polygon points="143.25,245.00 176.25,245.00 220.00,271.25 220.00,339.25 177.50,365.00 143.25,365.00 143.25,347.00 160.00,347.00 198.75,322.50 198.75,287.50 160.00,263.75 143.25,263.75" fill="#b2cebd"/>
<line x1="176.25" y1="245.00" x2="220.00" y2="271.25" stroke="#1c1c1c" stroke-width="0.5"/>
<line x1="177.50" y1="365.00" x2="220.00" y2="339.25" stroke="#1c1c1c" stroke-width="0.5"/>
<rect x="168.75" y="245.00" width="5.00" height="18.75" fill="#3b4a43"/>
<rect x="168.75" y="347.00" width="5.00" height="18.00" fill="#3b4a43"/>
<rect x="233.75" y="272.00" width="13.25" height="66.75" fill="#b2cebd"/>
<rect x="219.25" y="271.25" width="14.50" height="68.00" fill="#56635c"/>
<rect x="238.25" y="277.50" width="31.00" height="56.25" fill="#5b5965"/>
<rect x="269.25" y="277.50" width="4.30" height="56.25" fill="#b3b1cb"/>
<rect x="273.50" y="282.00" width="37.80" height="4.25" fill="#a9a7bf"/>
<rect x="273.50" y="324.50" width="37.80" height="4.25" fill="#a9a7bf"/>
<rect x="311.25" y="242.50" width="19.25" height="124.75" fill="#8a889c"/>
<rect x="327.00" y="242.50" width="3.50" height="124.75" fill="#a3a1ba"/>
<rect x="343.25" y="242.50" width="19.75" height="124.75" fill="#8f7f9d"/>
<rect x="359.50" y="242.50" width="3.50" height="124.75" fill="#b5a1c6"/>
<ellipse cx="318.75" cy="255.00" rx="3.00" ry="4.50" fill="#b0aec8"/>
<ellipse cx="319.45" cy="255.00" rx="2.30" ry="4.30" fill="#63628a"/>
<ellipse cx="318.75" cy="355.00" rx="3.00" ry="4.50" fill="#b0aec8"/>
<ellipse cx="319.45" cy="355.00" rx="2.30" ry="4.30" fill="#63628a"/>
<ellipse cx="351.25" cy="255.00" rx="3.00" ry="4.50" fill="#c0aed0"/>
<ellipse cx="351.95" cy="255.00" rx="2.30" ry="4.30" fill="#63628a"/>
<ellipse cx="351.25" cy="355.00" rx="3.00" ry="4.50" fill="#c0aed0"/>
<ellipse cx="351.95" cy="355.00" rx="2.30" ry="4.30" fill="#63628a"/>
<line x1="449.00" y1="377.70" x2="449.30" y2="372.70" stroke="#2a9a3a" stroke-width="0.7" stroke-linecap="round" opacity="0.9"/>
<circle cx="449.34" cy="372.10" r="0.35" fill="#3a3a44"/>
<line x1="449.00" y1="377.70" x2="454.20" y2="377.50" stroke="#b82a34" stroke-width="0.7" stroke-linecap="round" opacity="0.9"/>
<circle cx="454.82" cy="377.48" r="0.35" fill="#3a3a44"/>
<circle cx="449.00" cy="377.70" r="0.60" fill="#3c3cb4"/>
</g>
<g clip-path="url(#c4)">
<polygon points="593.50,269.00 612.00,269.00 610.00,279.00 603.00,289.80" fill="#4a5c51"/>
<line x1="593.60" y1="271.00" x2="602.60" y2="289.40" stroke="#1e2420" stroke-width="0.5"/>
<polygon points="582.00,253.50 594.50,246.00 612.00,251.00 599.50,257.50" fill="#5e7468"/>
<polygon points="582.00,253.50 599.50,257.50 600.50,274.60 594.00,276.60 586.30,275.20" fill="#86a391"/>
<polygon points="599.50,257.50 612.00,251.00 614.80,267.00 604.00,276.00 600.50,274.60" fill="#93b09e"/>
<ellipse cx="592.70" cy="266.60" rx="4.80" ry="5.90" fill="#4d5f54"/>
<ellipse cx="591.90" cy="266.30" rx="3.90" ry="5.40" fill="#a5c4b1"/>
<polygon points="536.25,342.50 587.50,318.75 601.25,296.25 620.50,257.50 658.75,235.00 661.75,238.00 652.00,255.00 682.50,301.25 637.50,328.75 630.00,340.00 600.00,366.25 588.75,376.25" fill="#7b798b"/>
<polygon points="623.75,260.00 660.00,239.25 649.25,255.00 633.25,282.50 623.00,271.75 620.75,270.00" fill="#54525f"/>
<polygon points="620.50,257.50 658.75,235.00 661.75,238.00 623.75,260.50" fill="#a9a7c1"/>
<polygon points="620.50,257.50 623.75,260.50 604.00,298.50 600.00,296.50" fill="#a9a7c1"/>
<polygon points="623.75,260.50 625.25,261.25 605.50,299.25 604.00,298.50" fill="#4c4a58"/>
<polygon points="620.00,271.75 623.75,272.50 653.75,317.50 650.00,319.25" fill="#a9a7c1"/>
<polygon points="648.75,255.00 652.00,255.00 682.50,301.25 679.50,303.75" fill="#a9a7c1"/>
<polygon points="637.50,328.75 721.25,280.00 724.25,282.50 641.25,332.00" fill="#a9a7c1"/>
<polygon points="637.50,329.20 641.25,332.00 724.25,282.50 716.00,293.50 656.00,335.00 591.25,377.50 589.00,376.00 600.00,366.25 630.00,340.00" fill="#18181c"/>
<polygon points="536.25,342.50 588.75,374.50 590.20,377.60 537.00,345.60" fill="#9c9ab2"/>
<ellipse cx="573.00" cy="335.50" rx="3.70" ry="2.50" fill="#a3a1bd"/>
<ellipse cx="573.00" cy="334.90" rx="3.50" ry="1.70" fill="#6e6c84"/>
<polygon points="542.00,306.80 580.00,304.50 592.00,296.50 583.20,314.50 535.50,317.50" fill="#5a6e62"/>
<polygon points="535.50,317.50 583.50,314.80 584.50,319.00 537.20,321.20" fill="#a3c2b0"/>
<polygon points="513.00,293.00 525.50,286.00 542.50,290.50 530.00,297.50" fill="#5e7468"/>
<polygon points="513.00,293.00 530.00,297.50 534.00,316.40 517.30,314.80" fill="#86a391"/>
<polygon points="530.00,297.50 542.50,290.50 546.20,309.00 534.00,316.40" fill="#93b09e"/>
<ellipse cx="523.60" cy="307.00" rx="4.90" ry="6.10" fill="#4d5f54"/>
<ellipse cx="522.70" cy="306.80" rx="3.90" ry="5.60" fill="#a5c4b1"/>
<polygon points="593.00,295.00 600.00,306.00 593.50,324.00 586.20,322.00 583.20,314.50" fill="#7f9a8a"/>
<polygon points="600.00,306.00 607.80,300.80 598.00,322.00 593.50,324.00" fill="#4f6257"/>
<polygon points="593.00,295.00 602.00,290.00 600.50,296.50 607.80,300.80 600.00,306.00" fill="#9dbba8"/>
<polygon points="661.25,366.25 747.00,316.25 747.50,318.25 662.50,368.25" fill="#332e3a"/>
<polygon points="658.00,363.00 743.75,313.75 747.00,316.25 661.25,366.25" fill="#c7b3d3"/>
<polygon points="648.00,372.00 658.00,363.00 661.25,366.25 651.25,375.50" fill="#9b8ba6"/>
<polygon points="651.25,375.50 661.25,366.25 662.50,368.25 653.00,376.50" fill="#b8a6c8"/>
<line x1="791.00" y1="377.40" x2="791.50" y2="372.40" stroke="#3c3cb4" stroke-width="0.7" stroke-linecap="round" opacity="0.9"/>
<circle cx="791.56" cy="371.80" r="0.35" fill="#3a3a44"/>
<line x1="791.00" y1="377.40" x2="793.80" y2="376.20" stroke="#2a9a3a" stroke-width="0.7" stroke-linecap="round" opacity="0.9"/>
<circle cx="794.14" cy="376.06" r="0.35" fill="#3a3a44"/>
<line x1="791.00" y1="377.40" x2="796.00" y2="379.80" stroke="#b82a34" stroke-width="0.7" stroke-linecap="round" opacity="0.9"/>
<circle cx="796.60" cy="380.09" r="0.35" fill="#3a3a44"/>
</g>
<rect x="113.60" y="385.90" width="686.40" height="10.10" fill="#f0efed"/>
<rect x="113.60" y="385.90" width="686.40" height="0.90" fill="#d9d7d3"/>
<path d="M115.6,386.7 L115.6,393.2 Q115.6,394.0 116.39999999999999,394.0 L158.0,394.0 Q158.8,394.0 158.8,393.2 L158.8,386.7 Z" fill="#ffffff" stroke="#c2c0ba" stroke-width="0.4"/>
<rect x="115.80" y="386.60" width="42.80" height="0.50" fill="#ffffff"/>
<rect x="116.80" y="388.40" width="0.80" height="3.00" fill="#e02020"/>
<rect x="116.80" y="388.40" width="1.80" height="0.80" fill="#e02020"/>
<circle cx="118.70" cy="390.40" r="1.05" fill="#2a50c8"/>
<text x="121.75" y="391.51" transform="rotate(0.03 121.75 391.51)" font-size="4.2" fill="#3a3a3a" textLength="29.50" lengthAdjust="spacingAndGlyphs">CleatsAdaptor : 1*</text>
<path d="M155.85,389.10 l1.8,1.8 m0,-1.8 l-1.8,1.8" stroke="#44423e" stroke-width="0.55" fill="none"/>
<path d="M159.8,386.9 L159.8,392.4 Q159.8,393.2 160.60000000000002,393.2 L204.2,393.2 Q205.0,393.2 205.0,392.4 L205.0,386.9 Z" fill="#e8e7e4" stroke="#c6c4be" stroke-width="0.4"/>
<rect x="161.80" y="388.40" width="0.80" height="3.00" fill="#e02020"/>
<rect x="161.80" y="388.40" width="1.80" height="0.80" fill="#e02020"/>
<circle cx="163.70" cy="390.40" r="1.05" fill="#2a50c8"/>
<text x="167.00" y="391.51" transform="rotate(0.03 167.00 391.51)" font-size="4.2" fill="#3a3a3a" textLength="32.50" lengthAdjust="spacingAndGlyphs">CleatsAdaptor : 2*</text>
<path d="M201.60,389.10 l1.8,1.8 m0,-1.8 l-1.8,1.8" stroke="#44423e" stroke-width="0.55" fill="none"/>
<path d="M206.0,386.9 L206.0,392.4 Q206.0,393.2 206.8,393.2 L249.6,393.2 Q250.4,393.2 250.4,392.4 L250.4,386.9 Z" fill="#e8e7e4" stroke="#c6c4be" stroke-width="0.4"/>
<rect x="208.05" y="388.40" width="0.80" height="3.00" fill="#e02020"/>
<rect x="208.05" y="388.40" width="1.80" height="0.80" fill="#e02020"/>
<circle cx="209.95" cy="390.40" r="1.05" fill="#2a50c8"/>
<text x="213.00" y="391.51" transform="rotate(0.03 213.00 391.51)" font-size="4.2" fill="#3a3a3a" textLength="32.00" lengthAdjust="spacingAndGlyphs">CleatsAdaptor : 3*</text>
<path d="M247.10,389.10 l1.8,1.8 m0,-1.8 l-1.8,1.8" stroke="#44423e" stroke-width="0.55" fill="none"/>
<path d="M251.4,386.9 L251.4,392.4 Q251.4,393.2 252.20000000000002,393.2 L295.4,393.2 Q296.2,393.2 296.2,392.4 L296.2,386.9 Z" fill="#e8e7e4" stroke="#c6c4be" stroke-width="0.4"/>
<rect x="253.05" y="388.40" width="0.80" height="3.00" fill="#e02020"/>
<rect x="253.05" y="388.40" width="1.80" height="0.80" fill="#e02020"/>
<circle cx="254.95" cy="390.40" r="1.05" fill="#2a50c8"/>
<text x="258.00" y="391.51" transform="rotate(0.03 258.00 391.51)" font-size="4.2" fill="#3a3a3a" textLength="32.00" lengthAdjust="spacingAndGlyphs">CleatsAdaptor : 6*</text>
<path d="M292.35,389.10 l1.8,1.8 m0,-1.8 l-1.8,1.8" stroke="#44423e" stroke-width="0.55" fill="none"/>
<text x="18.10" y="399.25" transform="rotate(0.03 18.10 399.25)" font-size="4.3" fill="#4a4a48" textLength="25.80" lengthAdjust="spacingAndGlyphs">Python console</text>
<rect x="792.6" y="396.7" width="1.9" height="1.9" fill="none" stroke="#77756f" stroke-width="0.4"/>
<path d="M796.9,396.7 l1.9,1.9 m0,-1.9 l-1.9,1.9" stroke="#77756f" stroke-width="0.45" fill="none"/>
<rect x="17.80" y="400.40" width="781.60" height="42.20" fill="#ffffff" stroke="#c9c7c2" stroke-width="0.4"/>
<text x="18.8" y="403.90" transform="rotate(0.03 18.8 403.90)" font-size="3.45" font-family="'Liberation Mono', monospace" textLength="185.94" lengthAdjust="spacingAndGlyphs" opacity="0.92"><tspan fill="#9c9ca8">&gt;&gt;&gt; </tspan><tspan fill="#3c3c3c">FreeCADGui.getDocument(</tspan><tspan fill="#e02020">"Unnamed"</tspan><tspan fill="#3c3c3c">).getObject(</tspan><tspan fill="#e02020">"Fusion012"</tspan><tspan fill="#3c3c3c">).ShapeColor = (</tspan><tspan fill="#2a3ad8">0.67,0.67,1.00</tspan><tspan fill="#3c3c3c">)</tspan></text>
<text x="18.8" y="408.09" transform="rotate(0.03 18.8 408.09)" font-size="3.45" font-family="'Liberation Mono', monospace" textLength="167.35" lengthAdjust="spacingAndGlyphs" opacity="0.92"><tspan fill="#9c9ca8">&gt;&gt;&gt; </tspan><tspan fill="#3c3c3c">Gui.getDocument(</tspan><tspan fill="#e02020">"Unnamed"</tspan><tspan fill="#3c3c3c">).getObject(</tspan><tspan fill="#e02020">"Fusion011"</tspan><tspan fill="#3c3c3c">).ShapeColor=(</tspan><tspan fill="#2a3ad8">0.40,0.15,0.11</tspan><tspan fill="#3c3c3c">)</tspan></text>
<text x="18.8" y="412.28" transform="rotate(0.03 18.8 412.28)" font-size="3.45" font-family="'Liberation Mono', monospace" textLength="101.23" lengthAdjust="spacingAndGlyphs" opacity="0.92"><tspan fill="#9c9ca8">&gt;&gt;&gt; </tspan><tspan fill="#3c3c3c">Gui.activeDocument().activeView().viewFront()</tspan></text>
<text x="18.8" y="416.47" transform="rotate(0.03 18.8 416.47)" font-size="3.45" font-family="'Liberation Mono', monospace" textLength="101.23" lengthAdjust="spacingAndGlyphs" opacity="0.92"><tspan fill="#9c9ca8">&gt;&gt;&gt; </tspan><tspan fill="#3c3c3c">Gui.activeDocument().activeView().viewFront()</tspan></text>
<text x="18.8" y="420.66" transform="rotate(0.03 18.8 420.66)" font-size="3.45" font-family="'Liberation Mono', monospace" textLength="97.10" lengthAdjust="spacingAndGlyphs" opacity="0.92"><tspan fill="#9c9ca8">&gt;&gt;&gt; </tspan><tspan fill="#3c3c3c">Gui.activeDocument().activeView().viewTop()</tspan></text>
<text x="18.8" y="424.85" transform="rotate(0.03 18.8 424.85)" font-size="3.45" font-family="'Liberation Mono', monospace" textLength="101.23" lengthAdjust="spacingAndGlyphs" opacity="0.92"><tspan fill="#9c9ca8">&gt;&gt;&gt; </tspan><tspan fill="#3c3c3c">Gui.activeDocument().activeView().viewRight()</tspan></text>
<text x="18.8" y="429.04" transform="rotate(0.03 18.8 429.04)" font-size="3.45" font-family="'Liberation Mono', monospace" textLength="113.63" lengthAdjust="spacingAndGlyphs" opacity="0.92"><tspan fill="#9c9ca8">&gt;&gt;&gt; </tspan><tspan fill="#3c3c3c">Gui.activeDocument().activeView().viewAxonometric()</tspan></text>
<text x="18.8" y="433.23" transform="rotate(0.03 18.8 433.23)" font-size="3.45" font-family="'Liberation Mono', monospace" textLength="78.51" lengthAdjust="spacingAndGlyphs" opacity="0.92"><tspan fill="#9c9ca8">&gt;&gt;&gt; </tspan><tspan fill="#3c3c3c">Gui.SendMsgToActiveView(</tspan><tspan fill="#e02020">"ViewFit"</tspan><tspan fill="#3c3c3c">)</tspan></text>
<text x="18.8" y="437.42" transform="rotate(0.03 18.8 437.42)" font-size="3.45" font-family="'Liberation Mono', monospace" textLength="78.51" lengthAdjust="spacingAndGlyphs" opacity="0.92"><tspan fill="#9c9ca8">&gt;&gt;&gt; </tspan><tspan fill="#3c3c3c">Gui.SendMsgToActiveView(</tspan><tspan fill="#e02020">"ViewFit"</tspan><tspan fill="#3c3c3c">)</tspan></text>
<text x="18.8" y="441.61" transform="rotate(0.03 18.8 441.61)" font-size="3.45" font-family="'Liberation Mono', monospace" textLength="6.20" lengthAdjust="spacingAndGlyphs" opacity="0.92"><tspan fill="#9c9ca8">&gt;&gt;&gt;</tspan></text>
<rect x="797.60" y="400.80" width="1.60" height="41.40" fill="#f4f3f2"/>
<rect x="797.90" y="436.40" width="1.00" height="5.00" fill="#c8c6c0" rx="0.5"/>
<text x="18.10" y="447.85" transform="rotate(0.03 18.10 447.85)" font-size="4.3" fill="#3a3a3a" textLength="9.30" lengthAdjust="spacingAndGlyphs">Valid</text>
<text x="765.60" y="447.81" transform="rotate(0.03 765.60 447.81)" font-size="4.2" fill="#3a3a3a" textLength="33.40" lengthAdjust="spacingAndGlyphs">344.10 x 172.24 mm</text>
</svg>
</body></html>
